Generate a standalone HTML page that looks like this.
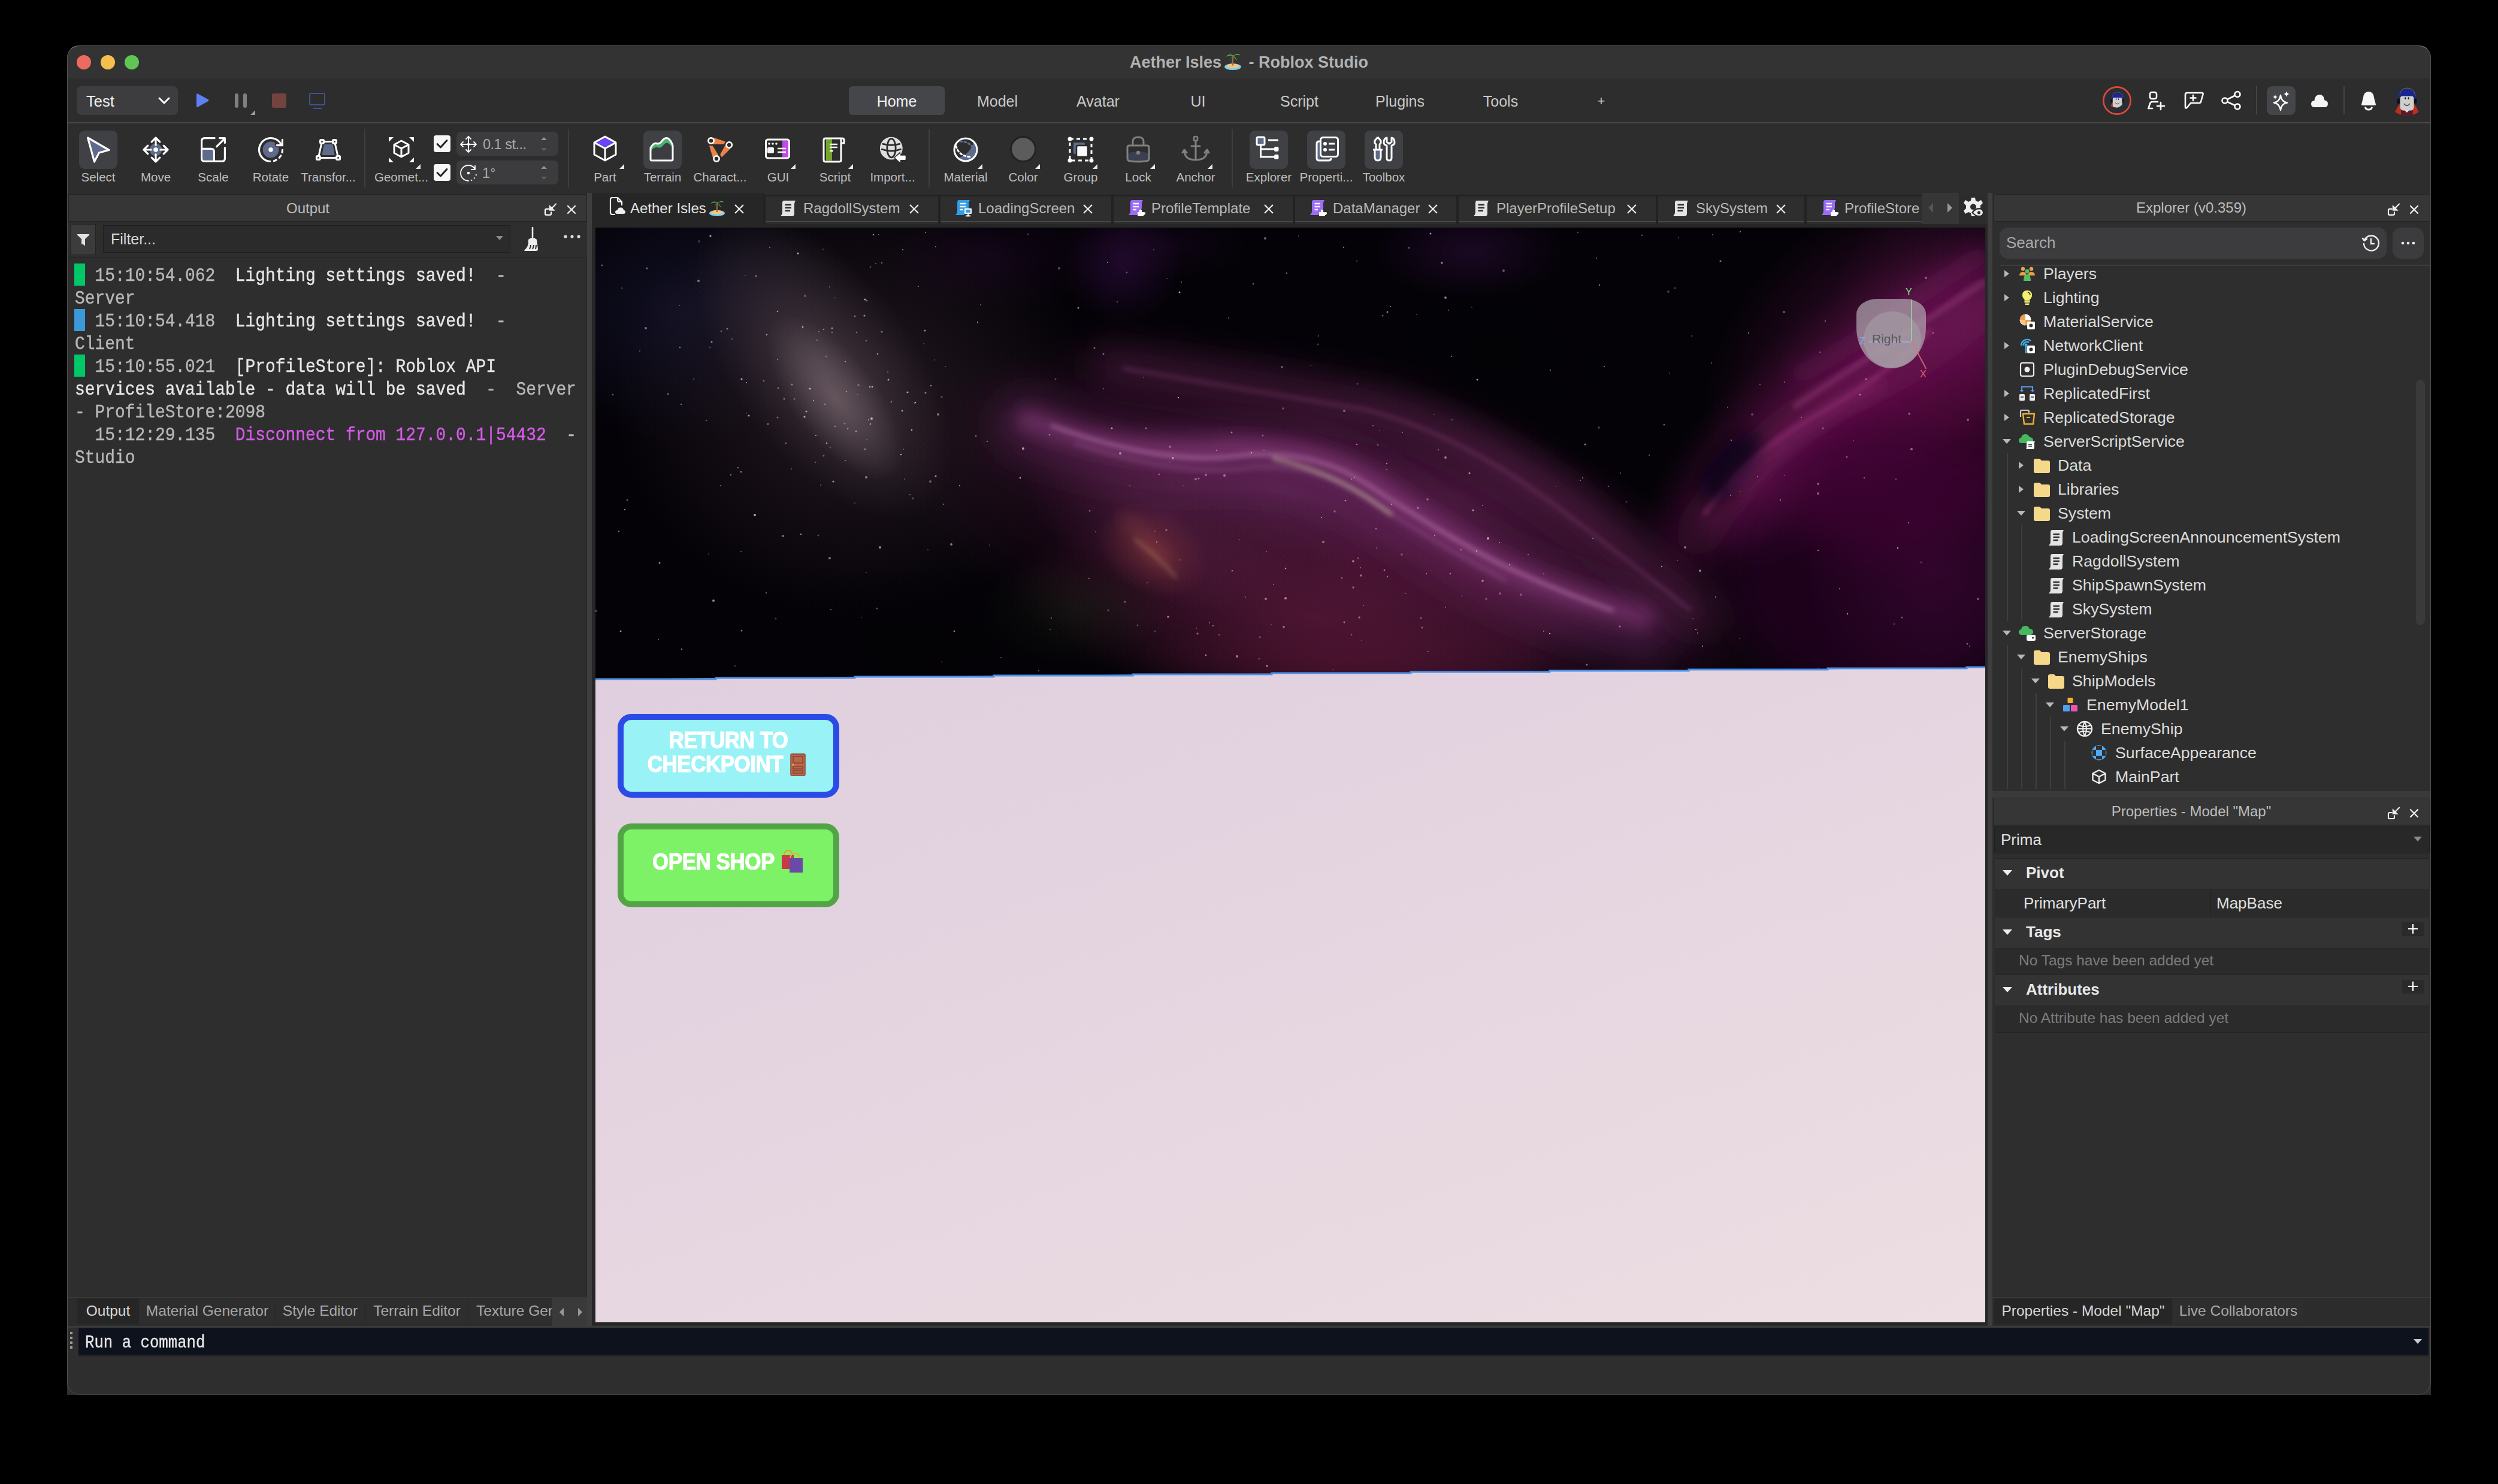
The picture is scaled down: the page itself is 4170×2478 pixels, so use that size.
<!DOCTYPE html>
<html><head><meta charset="utf-8">
<style>
*{margin:0;padding:0;box-sizing:border-box}
html,body{width:4170px;height:2478px;background:#000;overflow:hidden;font-family:"Liberation Sans",sans-serif;color:#d6d6d6}
div,span,svg{position:absolute}
span.i,svg.i{position:relative}
.win{left:112px;top:76px;width:3946px;height:2253px;border-radius:20px;background:#2c2c2c;overflow:hidden}
.ol{left:112px;top:76px;width:3946px;height:2253px;border-radius:20px;border:1.5px solid #4e4e4e;border-top-color:#7a7a7a;border-bottom-color:#444;z-index:50;pointer-events:none}
.t{white-space:nowrap}
.tl{top:92px;width:24px;height:24px;border-radius:50%}
.ttl{left:112px;width:3946px;top:84px;text-align:center;font-weight:bold;font-size:27px;color:#b2b2b2}
.tab1{top:145px;height:48px;text-align:center;font-size:25px;line-height:48px;color:#c9c9c9}
.btn{top:218px;width:64px;height:64px;border-radius:9px;background:#404145}
.lbl{top:284px;width:140px;text-align:center;font-size:20.5px;color:#bdbdbd;white-space:nowrap}
.sep{top:215px;width:2px;height:98px;background:#3e3e3e}
.tsep{top:144px;width:2px;height:47px;background:#444}
.log{font-family:"Liberation Mono",monospace;font-size:27.9px;white-space:pre;-webkit-text-stroke:0.35px currentColor}
.ln{left:0;white-space:pre;height:38px;line-height:38px;transform:scaleY(1.15);transform-origin:0 62%}
.ts{color:#b8b8b8}.msg{color:#e6e6e6}
.btab{top:2169px;height:40px;line-height:40px;text-align:center;font-size:24.5px;color:#a8a8a8;white-space:nowrap}
.ctab{top:334px;font-size:24px;color:#b9b9b9}
.tr{font-size:26.7px;color:#dcdcdc;height:40px;line-height:40px}
.bt{font-family:"Liberation Sans",sans-serif;font-weight:bold;font-size:38px;color:#fff;text-align:center;white-space:nowrap;letter-spacing:-0.5px;transform:scaleX(0.92);-webkit-text-stroke:1.2px #fff}
.tri{width:0;height:0;border-left:8px solid transparent;border-bottom:8px solid #e8e8e8}
</style></head><body>
<!-- window bg -->
<div class="win">
  <div style="left:0;top:0;width:3946px;height:55px;background:#333"></div>
  <div style="left:0;top:55px;width:3946px;height:73px;background:#2d2d2d"></div>
  <div style="left:0;top:128px;width:3946px;height:2px;background:#474747"></div>
  <div style="left:0;top:130px;width:3946px;height:116px;background:#2d2d2d"></div>
</div>
<div class="ol"></div>

<!-- title bar -->
<div class="tl" style="left:128px;background:#ed6a5e"></div>
<div class="tl" style="left:168px;background:#f5bf4f"></div>
<div class="tl" style="left:208px;background:#61c554"></div>
<div class="ttl t">Aether Isles<svg class="i" style="display:inline-block;vertical-align:-5px;margin:0 2px" width="34" height="34" viewBox="0 0 30 32"><ellipse cx="15" cy="26" rx="13" ry="5" fill="#7ad0f0"/><ellipse cx="15" cy="24.5" rx="10" ry="3.5" fill="#f2c580"/><path d="M15 24 Q14 15 16 8" stroke="#a0703a" stroke-width="2.2" fill="none"/><path d="M16 8 Q9 4 4 10 Q10 7 16 9 Q22 3 27 8 Q21 6 16 9 Q20 11 22 17 Q17 11 16 9 Q11 12 9 17 Q11 11 16 9Z" fill="#4caf50"/></svg> - Roblox Studio</div>

<!-- toolbar row -->
<div style="left:128px;top:144px;width:169px;height:48px;border-radius:8px;background:#3d3d40"></div>
<div class="t" style="left:144px;top:155px;font-size:25.5px;color:#f2f2f2">Test</div>
<svg style="left:263px;top:161px" width="22" height="14" viewBox="0 0 22 14"><path d="M3 3 L11 11 L19 3" stroke="#fff" stroke-width="3" fill="none" stroke-linecap="round" stroke-linejoin="round"/></svg>
<svg style="left:324px;top:154px" width="28" height="28" viewBox="0 0 28 28"><path d="M4 4 Q4 1.5 6.5 2.8 L23.5 12 Q25.5 13.5 23.5 15 L6.5 24.6 Q4 26 4 23.5Z" fill="#5f7ff5"/></svg>
<div style="left:392px;top:156px;width:6px;height:24px;border-radius:3px;background:#808080"></div>
<div style="left:406px;top:156px;width:6px;height:24px;border-radius:3px;background:#808080"></div>
<div class="tri" style="left:418px;top:184px;border-bottom-color:#9a9a9a"></div>
<div style="left:454px;top:156px;width:24px;height:24px;border-radius:3px;background:#744340"></div>
<div style="left:516px;top:155px;width:27px;height:21px;border-radius:3px;border:2px solid #3e5390"></div>
<div style="left:523px;top:180px;width:14px;height:2px;background:#3e5390"></div>

<div style="left:1417px;top:144px;width:160px;height:48px;border-radius:6px;background:#45464a"></div>
<div class="tab1 t" style="left:1417px;width:160px;color:#f4f4f4">Home</div>
<div class="tab1 t" style="left:1585px;width:160px">Model</div>
<div class="tab1 t" style="left:1753px;width:160px">Avatar</div>
<div class="tab1 t" style="left:1920px;width:160px">UI</div>
<div class="tab1 t" style="left:2089px;width:160px">Script</div>
<div class="tab1 t" style="left:2257px;width:160px">Plugins</div>
<div class="tab1 t" style="left:2425px;width:160px">Tools</div>
<div class="tab1 t" style="left:2593px;width:160px;font-size:22px">+</div>

<!-- right toolbar icons -->
<svg style="left:3510px;top:144px" width="48" height="48" viewBox="0 0 48 48"><circle cx="24" cy="24" r="22.6" fill="#2a2d33" stroke="#e0493a" stroke-width="2.6"/><clipPath id="avc"><circle cx="24" cy="24" r="21"/></clipPath><g clip-path="url(#avc)" transform="translate(5.5 5) scale(0.68)"><circle cx="28" cy="27.5" r="23.4" fill="#2a2d33"/><path d="M8.3 47 Q12 38 16.6 33 H39.6 Q44 38 47.5 47 Q40 53 28 52.5 Q16 53 8.3 47Z" fill="#b83020"/><path d="M18 41.5 H37.7 V52 Q28 53.5 18 52Z" fill="#5a1a28"/><path d="M22.6 42.6 H33.2 L28 48Z" fill="#e8e8e8"/><rect x="11" y="24.5" width="5.6" height="8.5" rx="2.5" fill="#111"/><rect x="39.5" y="24.5" width="5" height="8.5" rx="2.5" fill="#111"/><rect x="16.6" y="19" width="23" height="25.5" rx="5.5" fill="#cfcfcf"/><path d="M12 11.5 Q18 13 21 9.5 Q30 7 38 11 Q43.5 15 43.4 24 L40 25 Q39 20 36 20.5 H19 Q16.5 21 16.6 26 L15.5 24 Q13.5 17 16 15 Q13 14 12 11.5Z" fill="#1a2590"/><path d="M16 18 Q18 7 28 7 Q40 7 42 20" stroke="#8a7a40" stroke-width="0.8" fill="none"/><ellipse cx="25.3" cy="24.2" rx="1" ry="1.9" fill="#111"/><ellipse cx="30.6" cy="24.2" rx="1" ry="1.9" fill="#111"/><path d="M23 33.2 Q28 39.5 32.8 33.2" stroke="#111" stroke-width="1.2" fill="none"/></g></svg>
<svg style="left:3580px;top:150px" width="38" height="38" viewBox="0 0 38 38"><rect x="9" y="4" width="11" height="11" rx="3" stroke="#fff" stroke-width="2.6" fill="none"/><path d="M6.5 31 L9 23 Q10 20 13 20 H22" stroke="#fff" stroke-width="2.6" fill="none" stroke-linecap="round" stroke-linejoin="round"/><path d="M6.5 31 H13" stroke="#fff" stroke-width="2.6" stroke-linecap="round"/><path d="M27 21 V33 M21 27 H33" stroke="#fff" stroke-width="2.6" stroke-linecap="round"/></svg>
<svg style="left:3643px;top:150px" width="38" height="38" viewBox="0 0 38 38"><path d="M5 8 Q5 5 8 5 H33 Q35 5 34.5 7.5 L31 20 Q30.5 22 28.5 22 H14 L8 29.5 Q5 32 5 28.5Z" stroke="#fff" stroke-width="2.6" fill="none" stroke-linejoin="round"/><path d="M18 9 V18 M13.5 13.5 H22.5" stroke="#fff" stroke-width="2.6" stroke-linecap="round"/></svg>
<svg style="left:3706px;top:149px" width="38" height="38" viewBox="0 0 38 38"><circle cx="8" cy="19" r="4.5" stroke="#fff" stroke-width="2.6" fill="none"/><circle cx="29" cy="8.5" r="4.5" stroke="#fff" stroke-width="2.6" fill="none"/><circle cx="29" cy="29" r="4.5" stroke="#fff" stroke-width="2.6" fill="none"/><path d="M12 17 L25 10.5 M12 21 L25 27" stroke="#fff" stroke-width="2.6"/></svg>
<div class="tsep" style="left:3766px"></div>
<div style="left:3784px;top:144px;width:48px;height:48px;border-radius:9px;background:#45464a"></div>
<svg style="left:3788px;top:148px" width="40" height="40" viewBox="0 0 40 40"><path d="M19 11 Q20.5 22 30 23.5 Q20.5 25 19 36 Q17.5 25 8 23.5 Q17.5 22 19 11Z" stroke="#fff" stroke-width="2.4" fill="none" stroke-linejoin="round"/><path d="M29 4 Q29.7 8.3 34 9 Q29.7 9.7 29 14 Q28.3 9.7 24 9 Q28.3 8.3 29 4Z" fill="#fff"/><path d="M10 10 Q10.5 13.5 14 14 Q10.5 14.5 10 18 Q9.5 14.5 6 14 Q9.5 13.5 10 10Z" fill="#fff"/></svg>
<svg style="left:3856px;top:154px" width="32" height="28" viewBox="0 0 32 28"><path d="M8 25 Q2 25 2 19.5 Q2 14.5 7.5 14 Q8.5 4 16 4 Q23.5 4 24.5 13.5 Q30 14 30 19.5 Q30 25 24 25Z" fill="#f4f4f4"/></svg>
<div class="tsep" style="left:3912px"></div>
<svg style="left:3938px;top:150px" width="32" height="36" viewBox="0 0 32 36"><path d="M16 3 Q24 3 25 13 L28 24.5 Q28 26 26 26 H6 Q4 26 4 24.5 L7 13 Q8 3 16 3Z" fill="#f6f6f6"/><path d="M10.5 28.5 Q11 33 16 33 Q21 33 21.5 28.5" stroke="#f6f6f6" stroke-width="3" fill="none"/></svg>
<svg style="left:3990px;top:140px" width="56" height="56" viewBox="0 0 56 56"><circle cx="28" cy="27.5" r="23.4" fill="#2a2d33"/><path d="M8.3 47 Q12 38 16.6 33 H39.6 Q44 38 47.5 47 Q40 53 28 52.5 Q16 53 8.3 47Z" fill="#b83020"/><path d="M18 41.5 H37.7 V52 Q28 53.5 18 52Z" fill="#5a1a28"/><path d="M22.6 42.6 H33.2 L28 48Z" fill="#e8e8e8"/><rect x="11" y="24.5" width="5.6" height="8.5" rx="2.5" fill="#111"/><rect x="39.5" y="24.5" width="5" height="8.5" rx="2.5" fill="#111"/><rect x="16.6" y="19" width="23" height="25.5" rx="5.5" fill="#cfcfcf"/><path d="M12 11.5 Q18 13 21 9.5 Q30 7 38 11 Q43.5 15 43.4 24 L40 25 Q39 20 36 20.5 H19 Q16.5 21 16.6 26 L15.5 24 Q13.5 17 16 15 Q13 14 12 11.5Z" fill="#1a2590"/><path d="M16 18 Q18 7 28 7 Q40 7 42 20" stroke="#8a7a40" stroke-width="0.8" fill="none"/><ellipse cx="25.3" cy="24.2" rx="1" ry="1.9" fill="#111"/><ellipse cx="30.6" cy="24.2" rx="1" ry="1.9" fill="#111"/><path d="M23 33.2 Q28 39.5 32.8 33.2" stroke="#111" stroke-width="1.2" fill="none"/></svg>
</div>


<!-- ribbon -->
<div class="btn" style="left:132px"></div>
<div class="btn" style="left:1074px"></div>
<div class="btn" style="left:2086px"></div>
<div class="btn" style="left:2182px"></div>
<div class="btn" style="left:2278px"></div>
<div class="sep" style="left:608px"></div>
<div class="sep" style="left:948px"></div>
<div class="sep" style="left:1550px"></div>
<div class="sep" style="left:2056px"></div>
<!-- select -->
<svg style="left:140px;top:226px" width="48" height="48" viewBox="0 0 48 48"><path d="M6.5 4 L42 24.5 L25.5 29 L17.5 44Z" fill="#5f6b8a" stroke="#fff" stroke-width="3.2" stroke-linejoin="round"/></svg>
<!-- move -->
<svg style="left:236px;top:226px" width="48" height="48" viewBox="0 0 48 48"><circle cx="24" cy="24" r="10.3" fill="#5f6b8a"/><circle cx="24" cy="24" r="3.8" fill="#fff"/><path d="M24 4 V16.2 M24 31.8 V44 M4 24 H16.2 M31.8 24 H44 M17.2 10.8 L24 4 L30.8 10.8 M17.2 37.2 L24 44 L30.8 37.2 M10.8 17.2 L4 24 L10.8 30.8 M37.2 17.2 L44 24 L37.2 30.8" stroke="#fff" stroke-width="3.2" fill="none" stroke-linecap="round" stroke-linejoin="round"/></svg>
<!-- scale -->
<svg style="left:332px;top:226px" width="48" height="48" viewBox="0 0 48 48"><rect x="6.6" y="24.3" width="17" height="17.2" rx="2" fill="#5f6b8a"/><path d="M26.2 4.6 H9.6 Q4.6 4.6 4.6 9.6 V38.4 Q4.6 43.4 9.6 43.4 H38.4 Q43.4 43.4 43.4 38.4 V20.9" stroke="#fff" stroke-width="3.2" fill="none" stroke-linecap="round"/><path d="M4.6 22.3 H20.4 Q25.4 22.3 25.4 27.3 V43.4" stroke="#fff" stroke-width="3.2" fill="none"/><path d="M29.8 18.7 L42 6.5 M34.5 4.6 H43.4 V12.4" stroke="#fff" stroke-width="3.2" fill="none" stroke-linecap="round" stroke-linejoin="round"/></svg>
<!-- rotate -->
<svg style="left:428px;top:226px" width="48" height="48" viewBox="0 0 48 48"><circle cx="24" cy="24" r="13.4" fill="#5f6b8a"/><circle cx="35.2" cy="15.6" r="4.6" fill="#2d2d2d"/><circle cx="24" cy="24" r="3.7" fill="#fff"/><path d="M22.8 43.5 A19.5 19.5 0 1 1 41.7 15.8" stroke="#fff" stroke-width="3.2" fill="none" stroke-linecap="round"/><path d="M43.4 7.4 V16.7 H34.1" stroke="#fff" stroke-width="3.2" fill="none" stroke-linecap="round" stroke-linejoin="round"/><path d="M43.5 24.3 A19.5 19.5 0 0 1 43 28.4 M40.7 34 A19.5 19.5 0 0 1 38.3 37.3 M33.2 41.2 A19.5 19.5 0 0 1 29.4 42.7" stroke="#fff" stroke-width="3.2" fill="none" stroke-linecap="round"/></svg>
<!-- transform -->
<svg style="left:524px;top:226px" width="48" height="48" viewBox="0 0 48 48"><path d="M18 15 H30 Q31.5 15 31.8 16.5 L34.5 31 Q34.8 33 32.8 33 H15.6 Q13.6 33 13.9 31 L16.5 16.5 Q16.8 15 18 15Z" fill="#5f6b8a"/><path d="M13.5 10.4 H34.5 L40.6 37.5 H7.4Z" stroke="#fff" stroke-width="3" fill="none" stroke-linejoin="round"/><rect x="10.6" y="7.5" width="5.8" height="5.8" rx="1.5" fill="#2d2d2d" stroke="#fff" stroke-width="3.2"/><rect x="31.6" y="7.5" width="5.8" height="5.8" rx="1.5" fill="#2d2d2d" stroke="#fff" stroke-width="3.2"/><rect x="4.5" y="34.6" width="5.8" height="5.8" rx="1.5" fill="#2d2d2d" stroke="#fff" stroke-width="3.2"/><rect x="37.7" y="34.6" width="5.8" height="5.8" rx="1.5" fill="#2d2d2d" stroke="#fff" stroke-width="3.2"/></svg>
<!-- geometry -->
<svg style="left:646px;top:226px" width="48" height="48" viewBox="0 0 48 48"><path d="M3 3 H11 L3 11Z M45 3 H37 L45 11Z M3 45 H11 L3 37Z M45 45 H37 L45 37Z" fill="#fff"/><path d="M24 9 L36 15.5 V29.5 L24 36 L12 29.5 V15.5Z M12 15.5 L24 22 L36 15.5 M24 22 V36" stroke="#fff" stroke-width="3" fill="none" stroke-linejoin="round"/></svg>
<div class="tri" style="left:694px;top:274px"></div>
<div style="left:724px;top:226px;width:28px;height:28px;border-radius:4px;background:#f7f7f7"></div>
<svg style="left:724px;top:226px" width="28" height="28" viewBox="0 0 28 28"><path d="M6 14.5 L11.5 20 L22 8.5" stroke="#222" stroke-width="3" fill="none" stroke-linecap="round" stroke-linejoin="round"/></svg>
<div style="left:724px;top:274px;width:28px;height:28px;border-radius:4px;background:#f7f7f7"></div>
<svg style="left:724px;top:274px" width="28" height="28" viewBox="0 0 28 28"><path d="M6 14.5 L11.5 20 L22 8.5" stroke="#222" stroke-width="3" fill="none" stroke-linecap="round" stroke-linejoin="round"/></svg>
<div style="left:762px;top:220px;width:170px;height:40px;border-radius:8px;background:#3c3c3f"></div>
<div style="left:762px;top:268px;width:170px;height:40px;border-radius:8px;background:#3c3c3f"></div>
<svg style="left:767px;top:226px" width="30" height="30" viewBox="0 0 30 30"><circle cx="15" cy="15" r="2.2" fill="#fff"/><path d="M15 2 V28 M2 15 H28 M11 6 L15 2 L19 6 M11 24 L15 28 L19 24 M6 11 L2 15 L6 19 M24 11 L28 15 L24 19" stroke="#fff" stroke-width="1.8" fill="none" stroke-linecap="round" stroke-linejoin="round"/></svg>
<svg style="left:767px;top:274px" width="30" height="30" viewBox="0 0 30 30"><circle cx="15" cy="15" r="2.2" fill="#fff"/><path d="M15 28 A13 13 0 0 1 15 2 A13 13 0 0 1 26 8.5" stroke="#fff" stroke-width="1.8" fill="none" stroke-linecap="round"/><path d="M26 3 V9 H20" stroke="#fff" stroke-width="1.8" fill="none" stroke-linecap="round" stroke-linejoin="round"/><path d="M28 17 A13 13 0 0 1 18 27.6" stroke="#fff" stroke-width="1.8" fill="none" stroke-dasharray="2.5 3.5"/></svg>
<div class="t" style="left:806px;top:228px;font-size:23.5px;color:#a9a9a9;letter-spacing:-0.5px">0.1 st...</div>
<div class="t" style="left:805px;top:276px;font-size:23.5px;color:#a9a9a9">1°</div>
<svg style="left:900px;top:226px" width="16" height="30" viewBox="0 0 16 30"><path d="M3 8 L8 3 L13 8Z" fill="#8f8f8f"/><path d="M3 21 L8 26 L13 21Z" fill="#5e5e5e"/></svg>
<svg style="left:900px;top:274px" width="16" height="30" viewBox="0 0 16 30"><path d="M3 8 L8 3 L13 8Z" fill="#8f8f8f"/><path d="M3 21 L8 26 L13 21Z" fill="#5e5e5e"/></svg>
<!-- part -->
<svg style="left:986px;top:224px" width="48" height="48" viewBox="0 0 48 48"><path d="M24 5 L42 14.5 L24 24 L6 14.5Z" fill="#6b45f5"/><path d="M24 4 L42 14 V34 L24 44 L6 34 V14Z M6 14 L24 24 L42 14 M24 24 V44" stroke="#fff" stroke-width="3" fill="none" stroke-linejoin="round"/></svg>
<div class="tri" style="left:1034px;top:274px"></div>
<!-- terrain -->
<svg style="left:1082px;top:226px" width="48" height="48" viewBox="0 0 48 48"><path d="M4 21 Q9 12 14 13.5 Q18 15 22 11 Q27 3 33 5 Q38 8 41 17 L41 40 Q41 42 39 42 H7 Q4 42 4 40Z" fill="#3c3d42"/><path d="M4 21 Q9 12 14 13.5 Q18 15 22 11 Q27 3 33 5 Q38 8 41 17 L41 23 Q38 15 33 13 Q28 12 24 18 Q20 22 15 20 Q9 19 4 27Z" fill="#4eb26e"/><path d="M4 40 V21 Q9 12 14 13.5 Q18 15 22 11 Q27 3 33 5 Q38 8 41 17 V40 Q41 42 39 42 H6 Q4 42 4 40Z" stroke="#fff" stroke-width="3" fill="none" stroke-linejoin="round"/></svg>
<!-- character -->
<svg style="left:1178px;top:226px" width="48" height="48" viewBox="0 0 48 48"><path d="M12.3 3.6 L32.6 10.2 L30.7 14.9 L11.8 15.1Z M5.9 17.2 L11.8 17.7 L21.2 32.8 L12.3 38.5Z M33 15.8 L41.5 22 L26.9 36.6 L24 32.3Z" fill="#e98347"/><circle cx="9" cy="9" r="4.6" fill="#2b2b2b" stroke="#fff" stroke-width="2.7"/><circle cx="39.2" cy="16" r="4.6" fill="#2b2b2b" stroke="#fff" stroke-width="2.7"/><circle cx="18" cy="39" r="4.6" fill="#2b2b2b" stroke="#fff" stroke-width="2.7"/></svg>
<!-- gui -->
<svg style="left:1274px;top:226px" width="48" height="48" viewBox="0 0 48 48"><rect x="4.5" y="7" width="39" height="31" rx="3" fill="#2b2b2b"/><rect x="32" y="8.5" width="10" height="28" fill="#c04ae8"/><rect x="4.5" y="7" width="39" height="31" rx="3.5" stroke="#fff" stroke-width="3" fill="none"/><circle cx="10" cy="14" r="1.8" fill="#fff"/><circle cx="16" cy="14" r="1.8" fill="#fff"/><circle cx="22" cy="14" r="1.8" fill="#fff"/><rect x="7" y="20" width="11" height="10" rx="2" fill="#f4f4f4"/><path d="M24 22 H38 M24 28 H38" stroke="#fff" stroke-width="2.6"/></svg>
<div class="tri" style="left:1320px;top:274px"></div>
<!-- script -->
<svg style="left:1370px;top:226px" width="48" height="48" viewBox="0 0 48 48"><path d="M9 5 H19 V42 H9Z" fill="#72a52a"/><path d="M8 44 Q5 44 5 41 V8 Q5 5 8 5 H36 Q39 5 39 8 V13 H35 M8 44 H31 Q34 44 34 41 V5" stroke="#fff" stroke-width="3" fill="none" stroke-linejoin="round"/><path d="M15 15 H28 M15 20 H28 M15 26 H21" stroke="#fff" stroke-width="2.6"/></svg>
<div class="tri" style="left:1416px;top:274px"></div>
<!-- import -->
<svg style="left:1466px;top:226px" width="48" height="48" viewBox="0 0 48 48"><circle cx="21.8" cy="21.7" r="18.9" fill="#dedede"/><path d="M8 14.3 Q22 18.5 35.5 14.3 M6.3 23.2 Q22 29 37.4 23.2" stroke="#2b2b2b" stroke-width="2.8" fill="none" stroke-linecap="round"/><ellipse cx="22" cy="21.3" rx="7.2" ry="15.6" stroke="#2b2b2b" stroke-width="2.8" fill="none"/><path d="M26 37.5 L36.5 27.5 L38 32.3 H47 V42.2 H38 L36.5 47 Z" fill="#2b2b2b"/><path d="M28.4 37.5 L36.5 30.5 V34.2 H45.2 V40.4 H36.5 V44.6Z" fill="#fff" stroke="#fff" stroke-width="1" stroke-linejoin="round"/></svg>
<!-- material -->
<svg style="left:1588px;top:226px" width="48" height="48" viewBox="0 0 48 48"><path d="M38 10 A19 19 0 0 1 10 38 Q30 34 38 10Z" fill="#5f6b8a"/><circle cx="24" cy="24" r="19" stroke="#fff" stroke-width="3" fill="none"/><path d="M8 18 Q12 34 31 36" stroke="#fff" stroke-width="3" fill="none" stroke-dasharray="3 4" stroke-linecap="round"/><path d="M15 10 Q28 10 36 20" stroke="#5f6b8a" stroke-width="3" fill="none" stroke-dasharray="3 4" stroke-linecap="round"/></svg>
<div class="tri" style="left:1632px;top:274px"></div>
<!-- color -->
<div style="left:1686px;top:227px;width:44px;height:44px;border-radius:50%;background:#5c5c5c;border:3px solid #222"></div>
<div class="tri" style="left:1728px;top:274px"></div>
<!-- group -->
<svg style="left:1780px;top:226px" width="48" height="48" viewBox="0 0 48 48"><rect x="6" y="6" width="36" height="36" stroke="#fff" stroke-width="3" fill="none" stroke-dasharray="6 5"/><circle cx="6" cy="6" r="3.5" fill="#fff"/><circle cx="42" cy="6" r="3.5" fill="#fff"/><circle cx="6" cy="42" r="3.5" fill="#fff"/><circle cx="42" cy="42" r="3.5" fill="#fff"/><rect x="12" y="12" width="19" height="19" rx="2" fill="#5f6b8a"/><rect x="17" y="17" width="19" height="19" rx="2.5" fill="#fafafa" stroke="#2b2b2b" stroke-width="2.5"/></svg>
<div class="tri" style="left:1824px;top:274px"></div>
<!-- lock -->
<svg style="left:1876px;top:226px" width="48" height="48" viewBox="0 0 48 48"><path d="M6 30 Q24 24 42 30 V38 Q42 43 37 43 H11 Q6 43 6 38Z" fill="#3a3f52"/><path d="M15 17 V10 Q15 3 24 3 Q33 3 33 10 V17" stroke="#808080" stroke-width="3" fill="none"/><path d="M9 17 H39 Q42 17 42 20 V38 Q42 43 37 43 Q24 45 11 43 Q6 43 6 38 V20 Q6 17 9 17Z" stroke="#808080" stroke-width="3" fill="none"/><circle cx="24" cy="29" r="3.2" fill="#808080"/></svg>
<div class="tri" style="left:1920px;top:274px"></div>
<!-- anchor -->
<svg style="left:1972px;top:226px" width="48" height="48" viewBox="0 0 48 48"><rect x="21" y="2" width="6" height="7" rx="2" stroke="#808080" stroke-width="2.6" fill="none"/><path d="M24 9 V41 M17 18 H31 M5 25 Q5 41 24 41 Q43 41 43 25 M2 29 L5 24 L9 29 M39 29 L43 24 L46 29" stroke="#808080" stroke-width="3" fill="none" stroke-linecap="round" stroke-linejoin="round"/></svg>
<div class="tri" style="left:2016px;top:274px"></div>
<!-- explorer -->
<svg style="left:2094px;top:226px" width="48" height="48" viewBox="0 0 48 48"><rect x="4" y="3" width="13" height="13" rx="2" fill="#5f6b8a" stroke="#fff" stroke-width="3"/><path d="M23 8 H40 M10.5 16 V36 H35 M10.5 23 H35" stroke="#fff" stroke-width="3" fill="none"/><rect x="33" y="19" width="7.5" height="8" rx="2.5" fill="#fff"/><rect x="33" y="32" width="7.5" height="8" rx="2.5" fill="#fff"/></svg>
<!-- properties -->
<svg style="left:2190px;top:226px" width="48" height="48" viewBox="0 0 48 48"><path d="M12 10 Q8 10 8 14 V38 Q8 42 12 42 H28 Q31 42 31.5 39 H14 V10Z" fill="#5f6b8a"/><path d="M14 10 H12 Q8 10 8 14 V38 Q8 42 12 42 H28 Q32 42 32 38" stroke="#fff" stroke-width="3" fill="none"/><rect x="14.5" y="3.5" width="29" height="32" rx="4" stroke="#fff" stroke-width="3" fill="#404145"/><circle cx="22" cy="14" r="3" fill="#fff"/><circle cx="22" cy="24" r="3" fill="#fff"/><path d="M28 14 H38 M28 24 H38" stroke="#fff" stroke-width="3"/></svg>
<!-- toolbox -->
<svg style="left:2286px;top:226px" width="48" height="48" viewBox="0 0 48 48"><path d="M9 25 H19 V36 Q19 42 14 42 Q9 42 9 36Z" fill="#5f6b8a"/><path d="M14 3 L19 9 V13 L17 15 V24 M14 3 L9 9 V13 L11 15 V24 M6 24 H22 M9 24 V36 Q9 42 14 42 Q19 42 19 36 V24" stroke="#fff" stroke-width="3" fill="none" stroke-linejoin="round"/><path d="M29 4 V11 L33 14 L37 11 V4 Q42 5 42 12 Q42 16 37 17 V38 Q37 42 33 42 Q29 42 29 38 V17 Q24 16 24 12 Q24 5 29 4Z" stroke="#fff" stroke-width="3" fill="none" stroke-linejoin="round"/></svg>
<!-- labels -->
<div class="lbl" style="left:94px">Select</div>
<div class="lbl" style="left:190px">Move</div>
<div class="lbl" style="left:286px">Scale</div>
<div class="lbl" style="left:382px">Rotate</div>
<div class="lbl" style="left:478px">Transfor...</div>
<div class="lbl" style="left:600px">Geomet...</div>
<div class="lbl" style="left:940px">Part</div>
<div class="lbl" style="left:1036px">Terrain</div>
<div class="lbl" style="left:1132px">Charact...</div>
<div class="lbl" style="left:1229px">GUI</div>
<div class="lbl" style="left:1324px">Script</div>
<div class="lbl" style="left:1420px">Import...</div>
<div class="lbl" style="left:1542px">Material</div>
<div class="lbl" style="left:1638px">Color</div>
<div class="lbl" style="left:1734px">Group</div>
<div class="lbl" style="left:1830px">Lock</div>
<div class="lbl" style="left:1926px">Anchor</div>
<div class="lbl" style="left:2048px">Explorer</div>
<div class="lbl" style="left:2144px">Properti...</div>
<div class="lbl" style="left:2240px">Toolbox</div>


<!-- ===== LEFT OUTPUT PANEL ===== -->
<div style="left:112px;top:322px;width:868px;height:1894px;background:#2c2c2c"></div>
<div style="left:114px;top:324px;width:866px;height:46px;background:#363636;border:1px solid #232323"></div>
<div class="t" style="left:114px;top:334px;width:800px;text-align:center;font-size:24px;color:#bdbdbd">Output</div>
<svg style="left:905px;top:336px" width="28" height="28" viewBox="0 0 28 28"><path d="M10.7 13 H7 Q5 13 5 15 V21 Q5 23 7 23 H13 Q15 23 15 21 V18.4" stroke="#fff" stroke-width="2.1" fill="none" stroke-linecap="round"/><path d="M23.1 4.6 L16 11.7" stroke="#eee" stroke-width="2.1" stroke-linecap="round"/><path d="M11.9 6 V15.7 H21.7Z" fill="#eee"/></svg>
<svg style="left:944px;top:340px" width="20" height="20" viewBox="0 0 20 20"><path d="M4 4 L16 16 M16 4 L4 16" stroke="#eee" stroke-width="2.3" stroke-linecap="round"/></svg>
<div style="left:114px;top:370px;width:866px;height:60px;background:#2e2e2e"></div>
<div style="left:118px;top:374px;width:42px;height:52px;background:#3c3c3c;border:1.5px solid #232323"></div>
<svg style="left:127px;top:389px" width="24" height="24" viewBox="0 0 24 24"><path d="M2.5 2 H21.5 Q23 2 22 3.5 L15 10 V22 L12 19 L9 19 V10 L2 3.5 Q1 2 2.5 2Z" fill="#e2e2e2"/></svg>
<div style="left:172px;top:376px;width:680px;height:46px;background:#2b2b2b;border:1.5px solid #1e1e1e"></div>
<div class="t" style="left:185px;top:385px;font-size:25px;color:#d8d8d8">Filter...</div>
<svg style="left:826px;top:392px" width="16" height="12" viewBox="0 0 16 12"><path d="M2 2 H14 L8 9Z" fill="#8a8a8a"/></svg>
<svg style="left:872px;top:376px" width="36" height="48" viewBox="0 0 36 48"><path d="M17 4 V20" stroke="#eee" stroke-width="2.6" stroke-linecap="round"/><path d="M10 24 Q17 18 24 24 L26 40 Q26 43 23 43 H5 Q2 43 4 41 Q9 37 10 30Z" fill="#eee"/><path d="M12 40 Q14 35 14 33 M17 40 Q19 35 19 33 M22 40 Q23 36 23 33" stroke="#2e2e2e" stroke-width="2" fill="none"/></svg>
<svg style="left:940px;top:390px" width="30" height="10" viewBox="0 0 30 10"><circle cx="4" cy="5" r="2.6" fill="#ddd"/><circle cx="15" cy="5" r="2.6" fill="#ddd"/><circle cx="26" cy="5" r="2.6" fill="#ddd"/></svg>
<div style="left:114px;top:429px;width:866px;height:1737px;background:#2e2e2e;border-top:1.5px solid #232323;border-right:1px solid #252525"></div>
<!-- log -->
<div style="left:124px;top:440px;width:18px;height:37px;background:#00c767"></div>
<div style="left:124px;top:516px;width:18px;height:37px;background:#3a9ad9"></div>
<div style="left:124px;top:592px;width:18px;height:37px;background:#00c767"></div>
<div class="log" style="left:125px;top:442.5px">
<div class="ln" style="top:0"><span class="i ts">  15:10:54.062  </span><span class="i msg">Lighting settings saved!</span><span class="i ts">  -</span></div>
<div class="ln" style="top:38px"><span class="i ts">Server</span></div>
<div class="ln" style="top:76px"><span class="i ts">  15:10:54.418  </span><span class="i msg">Lighting settings saved!</span><span class="i ts">  -</span></div>
<div class="ln" style="top:114px"><span class="i ts">Client</span></div>
<div class="ln" style="top:152px"><span class="i ts">  15:10:55.021  </span><span class="i msg">[ProfileStore]: Roblox API</span></div>
<div class="ln" style="top:190px"><span class="i msg">services available - data will be saved</span><span class="i ts">  -  Server</span></div>
<div class="ln" style="top:228px"><span class="i ts">- ProfileStore:2098</span></div>
<div class="ln" style="top:266px"><span class="i ts">  15:12:29.135  </span><span class="i" style="color:#d55ae8">Disconnect from 127.0.0.1|54432</span><span class="i ts">  -</span></div>
<div class="ln" style="top:304px"><span class="i ts">Studio</span></div>
</div>
<!-- bottom tabs left -->
<div style="left:112px;top:2166px;width:868px;height:50px;background:#2c2c2c;border-top:1.5px solid #3a3a3a"></div>
<div style="left:129px;top:2168px;width:103px;height:43px;background:#262626"></div>
<div class="btab" style="left:129px;width:103px;color:#d8d8d8">Output</div>
<div class="btab" style="left:234px;width:224px;background:#2e2e2e">Material Generator</div>
<div class="btab" style="left:461px;width:147px;background:#2e2e2e">Style Editor</div>
<div class="btab" style="left:612px;width:168px;background:#2e2e2e">Terrain Editor</div>
<div class="btab" style="left:784px;width:138px;background:#2e2e2e;overflow:hidden;text-align:left;padding-left:11px">Texture Generator</div>
<div style="left:922px;top:2168px;width:58px;height:46px;background:#3a3a3a"></div>
<svg style="left:931px;top:2182px" width="14" height="18" viewBox="0 0 14 18"><path d="M10 2 V16 L3 9Z" fill="#999"/></svg>
<svg style="left:961px;top:2182px" width="14" height="18" viewBox="0 0 14 18"><path d="M4 2 V16 L11 9Z" fill="#999"/></svg>
<div style="left:980px;top:322px;width:8px;height:1894px;background:#3e3e3e"></div>

<!-- ===== CENTER ===== -->
<div style="left:988px;top:322px;width:2330px;height:1894px;background:#2c2c2c"></div>
<!-- center tabs -->
<div style="left:988px;top:322px;width:2330px;height:52px;background:#2c2c2c"></div>
<div style="left:989px;top:322px;width:287px;height:53px;background:#262626"></div>
<svg style="left:1016px;top:328px" width="30" height="32" viewBox="0 0 30 32"><path d="M11 30 H6 Q3 30 3 27 V5 Q3 2 6 2 H15 L22 9 V15" stroke="#fff" stroke-width="2.2" fill="none" stroke-linejoin="round"/><path d="M15 2 V6 Q15 9 18 9 H22" stroke="#fff" stroke-width="2.2" fill="none"/><path d="M14 29 Q11 29 11 26 Q11 23 14.5 23 Q15.5 18.5 20 18.5 Q24.5 18.5 25 23 Q28 23 28 26 Q28 29 25 29Z" fill="#eee"/></svg>
<div class="ctab t" style="left:1052px;color:#e2e2e2">Aether Isles</div>
<svg style="left:1182px;top:330px" width="30" height="32" viewBox="0 0 30 32"><ellipse cx="15" cy="26" rx="13" ry="5" fill="#7ad0f0"/><ellipse cx="15" cy="24.5" rx="10" ry="3.5" fill="#f2c580"/><path d="M15 24 Q14 15 16 8" stroke="#a0703a" stroke-width="2.2" fill="none"/><path d="M16 8 Q9 4 4 10 Q10 7 16 9 Q22 3 27 8 Q21 6 16 9 Q20 11 22 17 Q17 11 16 9 Q11 12 9 17 Q11 11 16 9Z" fill="#4caf50"/></svg>
<svg style="left:1224px;top:339px" width="20" height="20" viewBox="0 0 20 20"><path d="M3 3 L17 17 M17 3 L3 17" stroke="#eee" stroke-width="2.2"/></svg>
<div style="left:1278px;top:326px;width:288px;height:45px;background:#2e2e2e;border-top:2px solid #222;border-bottom:2px solid #474747"></div><div style="left:1274px;top:326px;width:4px;height:48px;background:#222"></div>
<svg style="left:1301px;top:333px" width="30" height="30" viewBox="0 0 30 30"><path d="M8 2 H27 Q25 5 25 8 V24 Q25 28 21 28 H2 Q5 25 5 22 V6 Q5 2 8 2Z" fill="#e4e4e4"/><path d="M9.5 9 H20 M9.5 14 H20 M9.5 19 H18" stroke="#2e2e2e" stroke-width="2.4"/></svg>
<div class="ctab t" style="left:1341px">RagdollSystem</div>
<svg style="left:1516px;top:339px" width="20" height="20" viewBox="0 0 20 20"><path d="M3 3 L17 17 M17 3 L3 17" stroke="#eee" stroke-width="2.2"/></svg>
<div style="left:1570px;top:326px;width:286px;height:45px;background:#2e2e2e;border-top:2px solid #222;border-bottom:2px solid #474747"></div><div style="left:1566px;top:326px;width:4px;height:48px;background:#222"></div>
<svg style="left:1593px;top:332px" width="32" height="32" viewBox="0 0 32 32"><path d="M8 2 H26 Q24 5 24 8 V16 L16 27 H2 Q5 24 5 21 V6 Q5 2 8 2Z" fill="#2f9de8"/><path d="M9.5 8 H19 M9.5 13 H19 M9.5 18 H15" stroke="#fff" stroke-width="2.4"/><rect x="17" y="16" width="12" height="9" rx="1" fill="#fff"/><rect x="19" y="18" width="8" height="5" fill="#2f9de8"/><path d="M23 25 V28 M19 28.5 H27" stroke="#fff" stroke-width="2"/></svg>
<div class="ctab t" style="left:1633px">LoadingScreen</div>
<svg style="left:1806px;top:339px" width="20" height="20" viewBox="0 0 20 20"><path d="M3 3 L17 17 M17 3 L3 17" stroke="#eee" stroke-width="2.2"/></svg>
<div style="left:1859px;top:326px;width:299px;height:45px;background:#2e2e2e;border-top:2px solid #222;border-bottom:2px solid #474747"></div><div style="left:1855px;top:326px;width:4px;height:48px;background:#222"></div>
<svg style="left:1882px;top:332px" width="32" height="32" viewBox="0 0 32 32"><path d="M8 2 H26 Q24 5 24 8 V16 L16 27 H2 Q5 24 5 21 V6 Q5 2 8 2Z" fill="#9b6cf5"/><path d="M9.5 8 H19 M9.5 13 H19 M9.5 18 H15" stroke="#fff" stroke-width="2.4"/><path d="M17 29 V22 H20 Q19 18 22 18 Q25 18 24 22 H27 Q31 22 30 25 Q29 27 27 27 V29Z" fill="#fff"/></svg>
<div class="ctab t" style="left:1922px">ProfileTemplate</div>
<svg style="left:2108px;top:339px" width="20" height="20" viewBox="0 0 20 20"><path d="M3 3 L17 17 M17 3 L3 17" stroke="#eee" stroke-width="2.2"/></svg>
<div style="left:2162px;top:326px;width:270px;height:45px;background:#2e2e2e;border-top:2px solid #222;border-bottom:2px solid #474747"></div><div style="left:2158px;top:326px;width:4px;height:48px;background:#222"></div>
<svg style="left:2185px;top:332px" width="32" height="32" viewBox="0 0 32 32"><path d="M8 2 H26 Q24 5 24 8 V16 L16 27 H2 Q5 24 5 21 V6 Q5 2 8 2Z" fill="#9b6cf5"/><path d="M9.5 8 H19 M9.5 13 H19 M9.5 18 H15" stroke="#fff" stroke-width="2.4"/><path d="M17 29 V22 H20 Q19 18 22 18 Q25 18 24 22 H27 Q31 22 30 25 Q29 27 27 27 V29Z" fill="#fff"/></svg>
<div class="ctab t" style="left:2225px">DataManager</div>
<svg style="left:2382px;top:339px" width="20" height="20" viewBox="0 0 20 20"><path d="M3 3 L17 17 M17 3 L3 17" stroke="#eee" stroke-width="2.2"/></svg>
<div style="left:2435px;top:326px;width:329px;height:45px;background:#2e2e2e;border-top:2px solid #222;border-bottom:2px solid #474747"></div><div style="left:2431px;top:326px;width:4px;height:48px;background:#222"></div>
<svg style="left:2458px;top:333px" width="30" height="30" viewBox="0 0 30 30"><path d="M8 2 H27 Q25 5 25 8 V24 Q25 28 21 28 H2 Q5 25 5 22 V6 Q5 2 8 2Z" fill="#e4e4e4"/><path d="M9.5 9 H20 M9.5 14 H20 M9.5 19 H18" stroke="#2e2e2e" stroke-width="2.4"/></svg>
<div class="ctab t" style="left:2498px">PlayerProfileSetup</div>
<svg style="left:2714px;top:339px" width="20" height="20" viewBox="0 0 20 20"><path d="M3 3 L17 17 M17 3 L3 17" stroke="#eee" stroke-width="2.2"/></svg>
<div style="left:2768px;top:326px;width:245px;height:45px;background:#2e2e2e;border-top:2px solid #222;border-bottom:2px solid #474747"></div><div style="left:2764px;top:326px;width:4px;height:48px;background:#222"></div>
<svg style="left:2791px;top:333px" width="30" height="30" viewBox="0 0 30 30"><path d="M8 2 H27 Q25 5 25 8 V24 Q25 28 21 28 H2 Q5 25 5 22 V6 Q5 2 8 2Z" fill="#e4e4e4"/><path d="M9.5 9 H20 M9.5 14 H20 M9.5 19 H18" stroke="#2e2e2e" stroke-width="2.4"/></svg>
<div class="ctab t" style="left:2831px">SkySystem</div>
<svg style="left:2963px;top:339px" width="20" height="20" viewBox="0 0 20 20"><path d="M3 3 L17 17 M17 3 L3 17" stroke="#eee" stroke-width="2.2"/></svg>
<div style="left:3016px;top:326px;width:254px;height:45px;background:#2e2e2e;border-top:2px solid #222;border-bottom:2px solid #474747"></div><div style="left:3012px;top:326px;width:4px;height:48px;background:#222"></div>
<svg style="left:3039px;top:332px" width="32" height="32" viewBox="0 0 32 32"><path d="M8 2 H26 Q24 5 24 8 V16 L16 27 H2 Q5 24 5 21 V6 Q5 2 8 2Z" fill="#9b6cf5"/><path d="M9.5 8 H19 M9.5 13 H19 M9.5 18 H15" stroke="#fff" stroke-width="2.4"/><path d="M17 29 V22 H20 Q19 18 22 18 Q25 18 24 22 H27 Q31 22 30 25 Q29 27 27 27 V29Z" fill="#fff"/></svg>
<div class="ctab t" style="left:3079px">ProfileStore</div>
<div style="left:3208px;top:322px;width:62px;height:52px;background:#363636"></div>
<svg style="left:3216px;top:336px" width="16" height="22" viewBox="0 0 16 22"><path d="M11 3 V19 L3 11Z" fill="#555"/></svg>
<svg style="left:3246px;top:336px" width="16" height="22" viewBox="0 0 16 22"><path d="M5 3 V19 L13 11Z" fill="#999"/></svg>
<svg style="left:3276px;top:328px" width="36" height="36" viewBox="0 0 36 36"><path d="M15 2 H21 L22 7 L26 9 L31 6 L34 11 L30 15 V20 L34 24 L31 29 L26 26 L22 28 L21 33 H15 L14 28 L10 26 L5 29 L2 24 L6 20 V15 L2 11 L5 6 L10 9 L14 7Z" fill="#eee"/><circle cx="18" cy="17.5" r="5" fill="#2c2c2c"/><path d="M15 27 Q21 19 28 19 Q34 19 36 27 Q34 34 28 34 Q21 34 15 27Z" fill="#2c2c2c"/><path d="M18 27 Q22 21.5 28 21.5 Q33 21.5 34 27 Q33 32 28 32 Q22 32 18 27Z" fill="#eee"/><circle cx="27.5" cy="27" r="2.6" fill="#2c2c2c"/></svg>
<div style="left:988px;top:374px;width:2330px;height:1838px;background:#262626"></div>
<!-- viewport -->
<div style="left:994px;top:380px;width:2320px;height:1828px;background:linear-gradient(160deg,#dccbdd 0%,#e3d3e0 50%,#ecdee2 100%);overflow:hidden">
<div style="left:0;top:0;width:2320px;height:760px;overflow:hidden;clip-path:polygon(0 0,2320px 0,2320px 735px,0 754px);background:#040207">
<div style="left:-130px;top:-80px;width:560px;height:440px;transform:rotate(0deg);background:radial-gradient(ellipse closest-side,rgba(25,25,55,0.6) 0%,transparent 100%)"></div>
<div style="left:30px;top:-70px;width:800px;height:720px;transform:rotate(0deg);background:radial-gradient(ellipse closest-side,rgba(42,30,38,0.85) 0%,transparent 100%)"></div>
<div style="left:230px;top:-70px;width:300px;height:600px;transform:rotate(-37deg);background:radial-gradient(ellipse closest-side,rgba(90,75,84,0.6) 0%,transparent 100%)"></div>
<div style="left:330px;top:120px;width:140px;height:330px;transform:rotate(-37deg);background:radial-gradient(ellipse closest-side,rgba(140,122,130,0.5) 0%,transparent 100%)"></div>
<div style="left:470px;top:-40px;width:380px;height:180px;transform:rotate(0deg);background:radial-gradient(ellipse closest-side,rgba(40,10,50,0.35) 0%,transparent 100%)"></div>
<div style="left:830px;top:-25px;width:260px;height:110px;transform:rotate(0deg);background:radial-gradient(ellipse closest-side,rgba(45,12,55,0.25) 0%,transparent 100%)"></div>
<div style="left:460px;top:250px;width:1600px;height:620px;transform:rotate(17deg);background:radial-gradient(ellipse closest-side,rgba(70,18,52,0.85) 0%,transparent 100%)"></div>
<div style="left:700px;top:470px;width:1000px;height:360px;transform:rotate(6deg);background:radial-gradient(ellipse closest-side,rgba(100,28,62,0.6) 0%,transparent 100%)"></div>
<div style="left:700px;top:340px;width:500px;height:280px;transform:rotate(22deg);background:radial-gradient(ellipse closest-side,rgba(100,40,80,0.5) 0%,transparent 100%)"></div>
<div style="left:870px;top:340px;width:560px;height:200px;transform:rotate(18deg);background:radial-gradient(ellipse closest-side,rgba(120,50,110,0.45) 0%,transparent 100%)"></div>
<div style="left:830px;top:470px;width:200px;height:140px;transform:rotate(30deg);background:radial-gradient(ellipse closest-side,rgba(140,60,60,0.5) 0%,transparent 100%)"></div>
<div style="left:640px;top:550px;width:320px;height:180px;transform:rotate(0deg);background:radial-gradient(ellipse closest-side,rgba(30,36,24,0.5) 0%,transparent 100%)"></div>
<div style="left:900px;top:645px;width:700px;height:150px;transform:rotate(0deg);background:radial-gradient(ellipse closest-side,rgba(85,20,50,0.55) 0%,transparent 100%)"></div>
<div style="left:1660px;top:120px;width:900px;height:340px;transform:rotate(-38deg);background:radial-gradient(ellipse closest-side,rgba(92,18,72,0.75) 0%,transparent 100%)"></div>
<div style="left:2070px;top:50px;width:420px;height:300px;transform:rotate(-30deg);background:radial-gradient(ellipse closest-side,rgba(105,22,80,0.5) 0%,transparent 100%)"></div>
<div style="left:1810px;top:350px;width:300px;height:160px;transform:rotate(-45deg);background:radial-gradient(ellipse closest-side,rgba(130,30,95,0.45) 0%,transparent 100%)"></div>
<div style="left:2020px;top:360px;width:420px;height:440px;transform:rotate(0deg);background:radial-gradient(ellipse closest-side,rgba(55,14,48,0.7) 0%,transparent 100%)"></div>
<div style="left:1180px;top:0px;width:640px;height:440px;transform:rotate(0deg);background:radial-gradient(ellipse closest-side,rgba(3,2,5,0.9) 0%,transparent 100%)"></div>
<div style="left:170px;top:560px;width:760px;height:280px;transform:rotate(0deg);background:radial-gradient(ellipse closest-side,rgba(3,2,4,0.7) 0%,transparent 100%)"></div>

<div style="left:1550px;top:640px;width:300px;height:160px;transform:rotate(0deg);background:radial-gradient(ellipse closest-side,rgba(10,4,14,0.6) 0%,transparent 100%)"></div>
<div style="left:1830px;top:-40px;width:700px;height:560px;transform:rotate(-35deg);background:radial-gradient(ellipse closest-side,rgba(95,18,72,0.7) 0%,transparent 100%)"></div>
<div style="left:2060px;top:-60px;width:420px;height:420px;background:radial-gradient(ellipse closest-side,rgba(100,20,78,0.45) 0%,transparent 100%)"></div>
<div style="left:1100px;top:300px;width:700px;height:300px;transform:rotate(25deg);background:radial-gradient(ellipse closest-side,rgba(115,38,95,0.4) 0%,transparent 100%)"></div>
<div style="left:780px;top:-40px;width:200px;height:200px;background:radial-gradient(ellipse closest-side,rgba(60,15,80,0.5) 0%,transparent 100%)"></div><div style="left:1300px;top:-40px;width:320px;height:160px;background:radial-gradient(ellipse closest-side,rgba(55,15,70,0.45) 0%,transparent 100%)"></div>
<svg style="left:0;top:0" width="2320" height="760" viewBox="0 0 2320 760"><defs><filter id="f1" x="-20%" y="-20%" width="140%" height="140%"><feGaussianBlur stdDeviation="14"/></filter><filter id="f2" x="-20%" y="-20%" width="140%" height="140%"><feGaussianBlur stdDeviation="4"/></filter><filter id="f3" x="-20%" y="-20%" width="140%" height="140%"><feGaussianBlur stdDeviation="2"/></filter><filter id="f4" x="-100%" y="-100%" width="300%" height="300%"><feGaussianBlur stdDeviation="32"/></filter></defs><path d="M720 330 Q900 400 1050 385 Q1200 380 1300 450 Q1400 520 1500 580 Q1600 630 1750 670" stroke="rgba(140,55,125,0.35)" stroke-width="110" stroke-linecap="round" fill="none" filter="url(#f4)"/><path d="M720 320 Q900 390 1050 370 Q1200 360 1300 430 Q1400 500 1500 560 Q1600 610 1750 650" stroke="rgba(160,70,145,0.45)" stroke-width="34" stroke-linecap="round" fill="none" filter="url(#f1)"/><path d="M760 330 Q950 400 1080 380 Q1200 370 1290 430 Q1380 490 1470 540 Q1560 590 1700 640" stroke="rgba(215,150,205,0.55)" stroke-width="5" fill="none" filter="url(#f2)"/><path d="M800 360 Q980 420 1100 400 Q1220 395 1300 460 Q1390 520 1520 590" stroke="rgba(190,120,180,0.35)" stroke-width="4" fill="none" filter="url(#f2)"/><path d="M850 230 Q1050 260 1300 300 Q1450 340 1600 450 Q1720 540 1850 650" stroke="rgba(150,55,120,0.35)" stroke-width="60" stroke-linecap="round" fill="none" filter="url(#f4)"/><path d="M880 235 Q1060 265 1290 305 Q1440 345 1590 455 Q1710 545 1830 640" stroke="rgba(190,100,170,0.35)" stroke-width="4" fill="none" filter="url(#f2)"/><ellipse cx="2200" cy="380" rx="220" ry="160" transform="rotate(-35 2200 380)" fill="rgba(75,14,50,0.45)" filter="url(#f4)"/><path d="M1130 385 Q1240 410 1330 480" stroke="rgba(215,220,170,0.5)" stroke-width="6" fill="none" filter="url(#f2)"/><path d="M880 480 Q930 530 960 570" stroke="rgba(190,90,80,0.35)" stroke-width="14" fill="none" filter="url(#f1)"/><path d="M900 520 Q940 550 970 585" stroke="rgba(220,200,120,0.35)" stroke-width="4" fill="none" filter="url(#f2)"/><path d="M1840 510 Q1950 340 2120 260 Q2250 190 2320 120" stroke="rgba(130,30,100,0.4)" stroke-width="80" stroke-linecap="round" fill="none" filter="url(#f4)"/><path d="M1850 480 Q1930 370 2060 300 Q2150 250 2230 170" stroke="rgba(175,60,140,0.5)" stroke-width="6" fill="none" filter="url(#f2)"/><path d="M2000 250 Q2100 200 2200 120 Q2260 80 2320 40" stroke="rgba(130,35,105,0.3)" stroke-width="30" fill="none" filter="url(#f1)"/><ellipse cx="1895" cy="400" rx="70" ry="35" transform="rotate(-50 1895 400)" fill="rgba(5,4,14,0.7)" filter="url(#f1)"/><ellipse cx="2150" cy="560" rx="260" ry="230" fill="rgba(60,14,48,0.45)" filter="url(#f4)"/><path d="M1900 440 Q2000 330 2150 260" stroke="rgba(160,50,130,0.45)" stroke-width="16" fill="none" filter="url(#f1)"/><path d="M2000 300 Q2150 200 2320 90" stroke="rgba(170,60,140,0.4)" stroke-width="10" fill="none" filter="url(#f2)"/><circle cx="1050" cy="414" r="2" fill="#f0c0d8" opacity="0.53"/><circle cx="1984" cy="141" r="2" fill="#a8a0b8" opacity="0.54"/><circle cx="1424" cy="138" r="1.2" fill="#b0c0e0" opacity="0.37"/><circle cx="1250" cy="659" r="1.5" fill="#cfc8d8" opacity="0.60"/><circle cx="919" cy="335" r="1.5" fill="#a8a0b8" opacity="0.63"/><circle cx="1446" cy="615" r="1" fill="#cfc8d8" opacity="0.32"/><circle cx="2041" cy="444" r="2" fill="#f0c0d8" opacity="0.46"/><circle cx="1371" cy="145" r="1" fill="#d8a0c0" opacity="0.45"/><circle cx="11" cy="63" r="1.5" fill="#b0c0e0" opacity="0.50"/><circle cx="1279" cy="689" r="1" fill="#d8a0c0" opacity="0.43"/><circle cx="1759" cy="380" r="1" fill="#cfc8d8" opacity="0.58"/><circle cx="250" cy="80" r="1" fill="#f0c0d8" opacity="0.33"/><circle cx="39" cy="507" r="1" fill="#e0d0e8" opacity="0.76"/><circle cx="121" cy="278" r="1.5" fill="#f0c0d8" opacity="0.51"/><circle cx="1314" cy="147" r="1.5" fill="#b0c0e0" opacity="0.47"/><circle cx="722" cy="11" r="1.2" fill="#cfc8d8" opacity="0.37"/><circle cx="1640" cy="8" r="1.2" fill="#f0c0d8" opacity="0.39"/><circle cx="1298" cy="331" r="1" fill="#d8a0c0" opacity="0.68"/><circle cx="973" cy="284" r="1.2" fill="#f0c0d8" opacity="0.80"/><circle cx="1" cy="640" r="2" fill="#a8a0b8" opacity="0.45"/><circle cx="2053" cy="156" r="1.2" fill="#a8a0b8" opacity="0.62"/><circle cx="233" cy="732" r="1" fill="#f0c0d8" opacity="0.43"/><circle cx="1793" cy="243" r="1" fill="#f0c0d8" opacity="0.34"/><circle cx="209" cy="431" r="1" fill="#cfc8d8" opacity="0.60"/><circle cx="862" cy="335" r="1.5" fill="#f0c0d8" opacity="0.72"/><circle cx="315" cy="286" r="1.5" fill="#e0d0e8" opacity="0.46"/><circle cx="530" cy="452" r="1.5" fill="#e0d0e8" opacity="0.38"/><circle cx="1459" cy="410" r="1.5" fill="#f0c0d8" opacity="0.74"/><circle cx="1400" cy="312" r="1" fill="#cfc8d8" opacity="0.32"/><circle cx="2233" cy="176" r="1.5" fill="#f0c0d8" opacity="0.43"/><circle cx="1911" cy="441" r="1" fill="#a8a0b8" opacity="0.39"/><circle cx="1671" cy="51" r="1" fill="#f0c0d8" opacity="0.58"/><circle cx="1978" cy="455" r="1" fill="#e0d0e8" opacity="0.76"/><circle cx="473" cy="12" r="1" fill="#f0c0d8" opacity="0.52"/><circle cx="140" cy="130" r="1" fill="#a8a0b8" opacity="0.59"/><circle cx="305" cy="268" r="1.2" fill="#b0c0e0" opacity="0.63"/><circle cx="1604" cy="432" r="1" fill="#a8a0b8" opacity="0.32"/><circle cx="42" cy="674" r="1.5" fill="#b0c0e0" opacity="0.78"/><circle cx="49" cy="471" r="1.2" fill="#cfc8d8" opacity="0.67"/><circle cx="740" cy="740" r="1" fill="#f0c0d8" opacity="0.57"/><circle cx="1710" cy="666" r="1.5" fill="#d8a0c0" opacity="0.65"/><circle cx="1840" cy="677" r="1" fill="#cfc8d8" opacity="0.64"/><circle cx="2090" cy="645" r="1.2" fill="#cfc8d8" opacity="0.73"/><circle cx="1329" cy="462" r="1.2" fill="#f0c0d8" opacity="0.59"/><circle cx="1413" cy="59" r="1.5" fill="#cfc8d8" opacity="0.80"/><circle cx="2041" cy="539" r="1.2" fill="#d8a0c0" opacity="0.65"/><circle cx="1062" cy="342" r="1.5" fill="#cfc8d8" opacity="0.56"/><circle cx="1194" cy="230" r="1" fill="#f0c0d8" opacity="0.31"/><circle cx="2221" cy="84" r="2" fill="#a8a0b8" opacity="0.63"/><circle cx="1128" cy="663" r="1" fill="#b0c0e0" opacity="0.37"/><circle cx="1419" cy="384" r="2" fill="#b0c0e0" opacity="0.63"/><circle cx="1025" cy="660" r="1" fill="#f0c0d8" opacity="0.63"/><circle cx="461" cy="319" r="2" fill="#e0d0e8" opacity="0.74"/><circle cx="892" cy="431" r="1" fill="#e0d0e8" opacity="0.37"/><circle cx="1152" cy="619" r="2" fill="#cfc8d8" opacity="0.66"/><circle cx="2204" cy="205" r="1" fill="#cfc8d8" opacity="0.53"/><circle cx="638" cy="158" r="1.2" fill="#f0c0d8" opacity="0.61"/><circle cx="1146" cy="233" r="2" fill="#a8a0b8" opacity="0.53"/><circle cx="173" cy="23" r="2" fill="#a8a0b8" opacity="0.32"/><circle cx="1644" cy="422" r="1" fill="#d8a0c0" opacity="0.70"/><circle cx="44" cy="101" r="1.2" fill="#e0d0e8" opacity="0.31"/><circle cx="1925" cy="176" r="1" fill="#cfc8d8" opacity="0.79"/><circle cx="268" cy="81" r="1.5" fill="#d8a0c0" opacity="0.62"/><circle cx="855" cy="58" r="1" fill="#e0d0e8" opacity="0.71"/><circle cx="594" cy="529" r="2" fill="#f0c0d8" opacity="0.57"/><circle cx="84" cy="168" r="2" fill="#b0c0e0" opacity="0.57"/><circle cx="2197" cy="370" r="2" fill="#e0d0e8" opacity="0.50"/><circle cx="1837" cy="671" r="1" fill="#f0c0d8" opacity="0.77"/><circle cx="1676" cy="96" r="1.2" fill="#e0d0e8" opacity="0.61"/><circle cx="2111" cy="279" r="1.5" fill="#d8a0c0" opacity="0.74"/><circle cx="1848" cy="699" r="1.2" fill="#b0c0e0" opacity="0.63"/><circle cx="475" cy="534" r="2" fill="#d8a0c0" opacity="0.76"/><circle cx="286" cy="179" r="1.2" fill="#cfc8d8" opacity="0.79"/><circle cx="1246" cy="585" r="1" fill="#b0c0e0" opacity="0.75"/><circle cx="1985" cy="258" r="1" fill="#cfc8d8" opacity="0.52"/><circle cx="1277" cy="568" r="1.2" fill="#cfc8d8" opacity="0.41"/><circle cx="2013" cy="317" r="1" fill="#e0d0e8" opacity="0.57"/><circle cx="1593" cy="678" r="1.2" fill="#e0d0e8" opacity="0.80"/><circle cx="2089" cy="383" r="1.5" fill="#d8a0c0" opacity="0.52"/><circle cx="2041" cy="428" r="1.5" fill="#cfc8d8" opacity="0.68"/><circle cx="1019" cy="413" r="2" fill="#d8a0c0" opacity="0.58"/><circle cx="381" cy="381" r="1.5" fill="#b0c0e0" opacity="0.46"/><circle cx="884" cy="625" r="1.5" fill="#e0d0e8" opacity="0.45"/><circle cx="327" cy="403" r="1" fill="#a8a0b8" opacity="0.55"/><circle cx="954" cy="85" r="1" fill="#a8a0b8" opacity="0.49"/><circle cx="1249" cy="33" r="1.2" fill="#a8a0b8" opacity="0.70"/><circle cx="1306" cy="363" r="1.5" fill="#e0d0e8" opacity="0.33"/><circle cx="1250" cy="306" r="2" fill="#f0c0d8" opacity="0.43"/><circle cx="1098" cy="94" r="1.2" fill="#f0c0d8" opacity="0.56"/><circle cx="252" cy="310" r="1" fill="#b0c0e0" opacity="0.36"/><circle cx="1808" cy="17" r="1" fill="#e0d0e8" opacity="0.41"/><circle cx="1594" cy="238" r="1" fill="#e0d0e8" opacity="0.61"/><circle cx="243" cy="541" r="1" fill="#a8a0b8" opacity="0.61"/><circle cx="1665" cy="519" r="1.2" fill="#cfc8d8" opacity="0.49"/><circle cx="959" cy="392" r="1" fill="#a8a0b8" opacity="0.40"/><circle cx="1465" cy="472" r="1.5" fill="#e0d0e8" opacity="0.73"/><circle cx="1419" cy="634" r="1" fill="#d8a0c0" opacity="0.61"/><circle cx="806" cy="134" r="1.5" fill="#b0c0e0" opacity="0.75"/><circle cx="452" cy="576" r="1" fill="#cfc8d8" opacity="0.37"/><circle cx="555" cy="538" r="1" fill="#f0c0d8" opacity="0.35"/><circle cx="1931" cy="312" r="2" fill="#d8a0c0" opacity="0.36"/><circle cx="934" cy="507" r="1" fill="#cfc8d8" opacity="0.40"/><circle cx="1583" cy="674" r="1" fill="#cfc8d8" opacity="0.65"/><circle cx="1472" cy="254" r="1.5" fill="#e0d0e8" opacity="0.70"/><circle cx="1118" cy="18" r="2" fill="#a8a0b8" opacity="0.61"/><circle cx="2100" cy="356" r="1" fill="#e0d0e8" opacity="0.36"/><circle cx="400" cy="117" r="1" fill="#d8a0c0" opacity="0.35"/><circle cx="144" cy="704" r="1.2" fill="#cfc8d8" opacity="0.68"/><circle cx="758" cy="346" r="1.5" fill="#b0c0e0" opacity="0.52"/><circle cx="1394" cy="10" r="1.5" fill="#cfc8d8" opacity="0.72"/><circle cx="421" cy="336" r="1.5" fill="#b0c0e0" opacity="0.50"/><circle cx="453" cy="122" r="1.5" fill="#cfc8d8" opacity="0.46"/><circle cx="197" cy="623" r="2" fill="#d8a0c0" opacity="0.77"/><circle cx="1322" cy="141" r="1.5" fill="#b0c0e0" opacity="0.70"/><circle cx="599" cy="674" r="1.5" fill="#d8a0c0" opacity="0.69"/><circle cx="1890" cy="300" r="1" fill="#a8a0b8" opacity="0.65"/><circle cx="1780" cy="566" r="1.2" fill="#e0d0e8" opacity="0.66"/><circle cx="164" cy="253" r="1.2" fill="#cfc8d8" opacity="0.31"/><circle cx="825" cy="473" r="1.5" fill="#cfc8d8" opacity="0.42"/><circle cx="2192" cy="493" r="1" fill="#e0d0e8" opacity="0.63"/><circle cx="1321" cy="394" r="1.2" fill="#a8a0b8" opacity="0.80"/><circle cx="1490" cy="519" r="2" fill="#f0c0d8" opacity="0.79"/><circle cx="53" cy="455" r="1.5" fill="#e0d0e8" opacity="0.43"/><circle cx="932" cy="37" r="1" fill="#d8a0c0" opacity="0.49"/><circle cx="228" cy="186" r="1" fill="#a8a0b8" opacity="0.57"/><circle cx="964" cy="385" r="2" fill="#cfc8d8" opacity="0.62"/><circle cx="1878" cy="56" r="1.5" fill="#d8a0c0" opacity="0.68"/><circle cx="105" cy="688" r="1" fill="#f0c0d8" opacity="0.54"/><circle cx="392" cy="367" r="1.5" fill="#a8a0b8" opacity="0.33"/><circle cx="2193" cy="311" r="1.5" fill="#f0c0d8" opacity="0.60"/><circle cx="848" cy="211" r="1.5" fill="#b0c0e0" opacity="0.58"/><circle cx="658" cy="530" r="1" fill="#cfc8d8" opacity="0.31"/><circle cx="568" cy="32" r="1" fill="#f0c0d8" opacity="0.68"/><circle cx="905" cy="664" r="1.5" fill="#f0c0d8" opacity="0.33"/><circle cx="2294" cy="699" r="1" fill="#e0d0e8" opacity="0.51"/><circle cx="1108" cy="720" r="1" fill="#cfc8d8" opacity="0.56"/><circle cx="2174" cy="535" r="1.2" fill="#e0d0e8" opacity="0.79"/><circle cx="1895" cy="447" r="1" fill="#cfc8d8" opacity="0.61"/><circle cx="1057" cy="151" r="1" fill="#b0c0e0" opacity="0.56"/><circle cx="288" cy="328" r="1.5" fill="#f0c0d8" opacity="0.53"/><circle cx="608" cy="431" r="1.2" fill="#b0c0e0" opacity="0.69"/><circle cx="1231" cy="738" r="1" fill="#d8a0c0" opacity="0.36"/><circle cx="1116" cy="372" r="1" fill="#a8a0b8" opacity="0.61"/><circle cx="833" cy="201" r="1.5" fill="#d8a0c0" opacity="0.58"/><circle cx="1373" cy="468" r="2" fill="#e0d0e8" opacity="0.39"/><circle cx="578" cy="725" r="1" fill="#d8a0c0" opacity="0.32"/><circle cx="141" cy="200" r="1.2" fill="#cfc8d8" opacity="0.61"/><circle cx="238" cy="401" r="1" fill="#cfc8d8" opacity="0.76"/><circle cx="373" cy="174" r="1" fill="#f0c0d8" opacity="0.54"/><circle cx="489" cy="254" r="1.5" fill="#e0d0e8" opacity="0.72"/><circle cx="172" cy="89" r="2" fill="#a8a0b8" opacity="0.72"/><circle cx="1784" cy="329" r="1.5" fill="#b0c0e0" opacity="0.50"/><circle cx="350" cy="114" r="2" fill="#a8a0b8" opacity="0.46"/><circle cx="1273" cy="552" r="1" fill="#f0c0d8" opacity="0.63"/><circle cx="1347" cy="342" r="1" fill="#cfc8d8" opacity="0.57"/><circle cx="1002" cy="420" r="2" fill="#d8a0c0" opacity="0.53"/><circle cx="1911" cy="7" r="1" fill="#e0d0e8" opacity="0.76"/><circle cx="1401" cy="514" r="1.2" fill="#d8a0c0" opacity="0.68"/><circle cx="761" cy="652" r="1" fill="#b0c0e0" opacity="0.63"/><circle cx="759" cy="671" r="1" fill="#d8a0c0" opacity="0.52"/><circle cx="1380" cy="668" r="1.5" fill="#b0c0e0" opacity="0.52"/><circle cx="1863" cy="226" r="1" fill="#e0d0e8" opacity="0.50"/><circle cx="2168" cy="662" r="1" fill="#cfc8d8" opacity="0.48"/><circle cx="848" cy="269" r="1.2" fill="#a8a0b8" opacity="0.49"/><circle cx="452" cy="417" r="2" fill="#f0c0d8" opacity="0.57"/><circle cx="1940" cy="416" r="1" fill="#cfc8d8" opacity="0.68"/><circle cx="2044" cy="208" r="1" fill="#e0d0e8" opacity="0.56"/><circle cx="1262" cy="420" r="1" fill="#d8a0c0" opacity="0.72"/><circle cx="981" cy="431" r="1" fill="#a8a0b8" opacity="0.34"/><circle cx="189" cy="545" r="1" fill="#cfc8d8" opacity="0.31"/><circle cx="1516" cy="72" r="2" fill="#d8a0c0" opacity="0.51"/><circle cx="1652" cy="362" r="1.5" fill="#b0c0e0" opacity="0.68"/><circle cx="915" cy="250" r="1" fill="#d8a0c0" opacity="0.37"/><circle cx="1132" cy="596" r="1" fill="#d8a0c0" opacity="0.61"/><circle cx="107" cy="560" r="1.5" fill="#b0c0e0" opacity="0.73"/><circle cx="1870" cy="617" r="1.2" fill="#a8a0b8" opacity="0.62"/><circle cx="1215" cy="525" r="2" fill="#cfc8d8" opacity="0.51"/><circle cx="975" cy="108" r="1.5" fill="#e0d0e8" opacity="0.80"/><circle cx="871" cy="124" r="1" fill="#f0c0d8" opacity="0.51"/><circle cx="677" cy="718" r="1" fill="#f0c0d8" opacity="0.45"/><circle cx="266" cy="480" r="2" fill="#e0d0e8" opacity="0.76"/><circle cx="1747" cy="13" r="1.2" fill="#cfc8d8" opacity="0.46"/><circle cx="458" cy="266" r="1.5" fill="#e0d0e8" opacity="0.60"/><circle cx="1095" cy="376" r="1.2" fill="#e0d0e8" opacity="0.75"/><circle cx="934" cy="674" r="1" fill="#d8a0c0" opacity="0.57"/><circle cx="1896" cy="355" r="1" fill="#f0c0d8" opacity="0.74"/><circle cx="2121" cy="253" r="1.5" fill="#cfc8d8" opacity="0.54"/><circle cx="513" cy="37" r="1" fill="#f0c0d8" opacity="0.79"/><circle cx="1844" cy="573" r="2" fill="#cfc8d8" opacity="0.63"/><circle cx="551" cy="8" r="1.2" fill="#b0c0e0" opacity="0.53"/><circle cx="572" cy="312" r="2" fill="#e0d0e8" opacity="0.51"/><circle cx="1791" cy="107" r="2" fill="#a8a0b8" opacity="0.37"/><circle cx="1721" cy="458" r="1.5" fill="#a8a0b8" opacity="0.33"/><circle cx="1327" cy="132" r="1" fill="#e0d0e8" opacity="0.71"/><circle cx="191" cy="200" r="1.5" fill="#a8a0b8" opacity="0.35"/><circle cx="1114" cy="347" r="1.5" fill="#a8a0b8" opacity="0.57"/><circle cx="1174" cy="14" r="1" fill="#f0c0d8" opacity="0.40"/><circle cx="1583" cy="578" r="1.2" fill="#e0d0e8" opacity="0.32"/><circle cx="959" cy="366" r="2" fill="#b0c0e0" opacity="0.46"/><circle cx="941" cy="412" r="1.2" fill="#d8a0c0" opacity="0.66"/><circle cx="835" cy="508" r="1" fill="#d8a0c0" opacity="0.50"/><circle cx="1071" cy="716" r="2" fill="#cfc8d8" opacity="0.63"/><circle cx="29" cy="279" r="1.5" fill="#f0c0d8" opacity="0.42"/><circle cx="1309" cy="339" r="1" fill="#d8a0c0" opacity="0.40"/><circle cx="1429" cy="215" r="1.2" fill="#a8a0b8" opacity="0.67"/><circle cx="2213" cy="559" r="1.5" fill="#d8a0c0" opacity="0.34"/><circle cx="438" cy="279" r="1" fill="#b0c0e0" opacity="0.45"/><circle cx="635" cy="348" r="1.5" fill="#b0c0e0" opacity="0.52"/><circle cx="887" cy="75" r="1.5" fill="#cfc8d8" opacity="0.37"/><circle cx="1463" cy="133" r="1" fill="#f0c0d8" opacity="0.32"/><circle cx="1075" cy="521" r="1" fill="#e0d0e8" opacity="0.32"/><circle cx="2291" cy="321" r="2" fill="#cfc8d8" opacity="0.47"/><circle cx="1910" cy="686" r="1" fill="#d8a0c0" opacity="0.40"/><circle cx="343" cy="512" r="1.2" fill="#b0c0e0" opacity="0.76"/><circle cx="1445" cy="538" r="1.5" fill="#d8a0c0" opacity="0.46"/><circle cx="1830" cy="181" r="1.5" fill="#a8a0b8" opacity="0.31"/><circle cx="768" cy="253" r="1.5" fill="#f0c0d8" opacity="0.35"/><circle cx="876" cy="377" r="2" fill="#b0c0e0" opacity="0.71"/><circle cx="1419" cy="117" r="2" fill="#a8a0b8" opacity="0.75"/><circle cx="1272" cy="261" r="1.5" fill="#a8a0b8" opacity="0.37"/><circle cx="1655" cy="730" r="1.5" fill="#d8a0c0" opacity="0.65"/><circle cx="2171" cy="420" r="1" fill="#d8a0c0" opacity="0.63"/><circle cx="1802" cy="101" r="1.2" fill="#a8a0b8" opacity="0.51"/><circle cx="774" cy="68" r="2" fill="#b0c0e0" opacity="0.43"/><circle cx="2049" cy="335" r="1.5" fill="#e0d0e8" opacity="0.42"/><circle cx="1321" cy="404" r="1" fill="#a8a0b8" opacity="0.76"/><circle cx="391" cy="552" r="2" fill="#b0c0e0" opacity="0.60"/><circle cx="285" cy="610" r="1" fill="#d8a0c0" opacity="0.75"/><circle cx="559" cy="424" r="2" fill="#e0d0e8" opacity="0.39"/><circle cx="1271" cy="56" r="1" fill="#f0c0d8" opacity="0.39"/><circle cx="2290" cy="695" r="1.5" fill="#e0d0e8" opacity="0.45"/><circle cx="1557" cy="546" r="1.2" fill="#a8a0b8" opacity="0.60"/><circle cx="1865" cy="12" r="1" fill="#f0c0d8" opacity="0.53"/><circle cx="332" cy="286" r="1.5" fill="#f0c0d8" opacity="0.39"/><circle cx="1206" cy="195" r="1.5" fill="#b0c0e0" opacity="0.33"/><circle cx="1819" cy="534" r="2" fill="#e0d0e8" opacity="0.50"/><circle cx="1154" cy="76" r="1" fill="#f0c0d8" opacity="0.75"/><circle cx="2118" cy="418" r="1.2" fill="#b0c0e0" opacity="0.54"/><circle cx="2308" cy="620" r="2" fill="#d8a0c0" opacity="0.50"/><circle cx="1007" cy="419" r="1.5" fill="#b0c0e0" opacity="0.56"/><circle cx="1003" cy="669" r="1" fill="#cfc8d8" opacity="0.45"/><circle cx="1430" cy="321" r="1.2" fill="#a8a0b8" opacity="0.46"/><circle cx="1832" cy="653" r="1" fill="#e0d0e8" opacity="0.36"/><circle cx="1037" cy="372" r="1.2" fill="#cfc8d8" opacity="0.54"/><circle cx="244" cy="673" r="1.5" fill="#b0c0e0" opacity="0.63"/><circle cx="2181" cy="651" r="1.5" fill="#d8a0c0" opacity="0.48"/><circle cx="1267" cy="417" r="1" fill="#e0d0e8" opacity="0.62"/><circle cx="978" cy="91" r="1" fill="#cfc8d8" opacity="0.56"/><circle cx="301" cy="653" r="1.5" fill="#f0c0d8" opacity="0.30"/><circle cx="566" cy="221" r="1" fill="#e0d0e8" opacity="0.33"/><circle cx="2077" cy="603" r="1.2" fill="#e0d0e8" opacity="0.48"/><circle cx="1358" cy="34" r="1" fill="#f0c0d8" opacity="0.75"/><circle cx="714" cy="369" r="2" fill="#f0c0d8" opacity="0.74"/><circle cx="470" cy="636" r="1.5" fill="#cfc8d8" opacity="0.40"/><circle cx="1944" cy="262" r="1.2" fill="#cfc8d8" opacity="0.39"/><circle cx="2041" cy="737" r="1" fill="#a8a0b8" opacity="0.62"/><circle cx="444" cy="651" r="1" fill="#d8a0c0" opacity="0.35"/><circle cx="1684" cy="232" r="1" fill="#f0c0d8" opacity="0.66"/><circle cx="313" cy="515" r="2" fill="#f0c0d8" opacity="0.51"/><circle cx="393" cy="638" r="1" fill="#d8a0c0" opacity="0.65"/><circle cx="397" cy="424" r="1.6" fill="#e8e0e8" opacity="0.63"/><circle cx="449" cy="147" r="1.6" fill="#e8e0e8" opacity="0.56"/><circle cx="528" cy="338" r="1.3" fill="#e8e0e8" opacity="0.75"/><circle cx="456" cy="321" r="1" fill="#e8e0e8" opacity="0.62"/><circle cx="709" cy="418" r="1.3" fill="#e8e0e8" opacity="0.76"/><circle cx="654" cy="357" r="1" fill="#e8e0e8" opacity="0.60"/><circle cx="400" cy="332" r="1.6" fill="#e8e0e8" opacity="0.34"/><circle cx="376" cy="430" r="1" fill="#e8e0e8" opacity="0.39"/><circle cx="417" cy="224" r="1" fill="#e8e0e8" opacity="0.79"/><circle cx="551" cy="276" r="1.6" fill="#e8e0e8" opacity="0.49"/><circle cx="548" cy="194" r="1" fill="#e8e0e8" opacity="0.33"/><circle cx="464" cy="12" r="1.3" fill="#e8e0e8" opacity="0.63"/><circle cx="450" cy="120" r="1.6" fill="#e8e0e8" opacity="0.71"/><circle cx="192" cy="14" r="1.6" fill="#e8e0e8" opacity="0.78"/><circle cx="516" cy="420" r="1" fill="#e8e0e8" opacity="0.36"/><circle cx="256" cy="314" r="1.6" fill="#e8e0e8" opacity="0.69"/><circle cx="468" cy="60" r="1" fill="#e8e0e8" opacity="0.43"/><circle cx="194" cy="191" r="1.6" fill="#e8e0e8" opacity="0.55"/><circle cx="578" cy="283" r="1.6" fill="#e8e0e8" opacity="0.33"/><circle cx="185" cy="322" r="1.3" fill="#e8e0e8" opacity="0.38"/><circle cx="560" cy="264" r="1.3" fill="#e8e0e8" opacity="0.55"/><circle cx="380" cy="36" r="1" fill="#e8e0e8" opacity="0.34"/><circle cx="550" cy="172" r="1.6" fill="#e8e0e8" opacity="0.59"/><circle cx="391" cy="99" r="1" fill="#e8e0e8" opacity="0.46"/><circle cx="521" cy="275" r="1.6" fill="#e8e0e8" opacity="0.67"/><circle cx="459" cy="66" r="1.3" fill="#e8e0e8" opacity="0.34"/><circle cx="452" cy="189" r="1.3" fill="#e8e0e8" opacity="0.42"/><circle cx="244" cy="253" r="1.6" fill="#e8e0e8" opacity="0.69"/><circle cx="534" cy="292" r="1.3" fill="#e8e0e8" opacity="0.65"/><circle cx="334" cy="-15" r="1" fill="#e8e0e8" opacity="0.54"/><circle cx="445" cy="-71" r="1" fill="#e8e0e8" opacity="0.67"/><circle cx="74" cy="206" r="1" fill="#e8e0e8" opacity="0.42"/><circle cx="471" cy="211" r="1.3" fill="#e8e0e8" opacity="0.58"/><circle cx="143" cy="295" r="1" fill="#e8e0e8" opacity="0.64"/><circle cx="353" cy="-44" r="1.6" fill="#e8e0e8" opacity="0.41"/><circle cx="417" cy="389" r="1" fill="#e8e0e8" opacity="0.51"/><circle cx="494" cy="291" r="1.3" fill="#e8e0e8" opacity="0.47"/><circle cx="584" cy="232" r="1" fill="#e8e0e8" opacity="0.38"/><circle cx="86" cy="68" r="1.6" fill="#e8e0e8" opacity="0.47"/><circle cx="338" cy="43" r="1.6" fill="#e8e0e8" opacity="0.76"/><circle cx="525" cy="446" r="1" fill="#e8e0e8" opacity="0.49"/><circle cx="436" cy="175" r="1.3" fill="#e8e0e8" opacity="0.42"/><circle cx="478" cy="59" r="1.3" fill="#e8e0e8" opacity="0.40"/><circle cx="450" cy="370" r="1.3" fill="#e8e0e8" opacity="0.54"/><circle cx="252" cy="259" r="1" fill="#e8e0e8" opacity="0.73"/><circle cx="453" cy="354" r="1" fill="#e8e0e8" opacity="0.32"/><circle cx="372" cy="514" r="1.6" fill="#e8e0e8" opacity="0.31"/><circle cx="459" cy="328" r="1.3" fill="#e8e0e8" opacity="0.58"/><circle cx="370" cy="188" r="1" fill="#e8e0e8" opacity="0.48"/><circle cx="581" cy="462" r="1.3" fill="#e8e0e8" opacity="0.37"/><circle cx="433" cy="460" r="1" fill="#e8e0e8" opacity="0.31"/><circle cx="368" cy="347" r="1" fill="#e8e0e8" opacity="0.73"/><circle cx="352" cy="307" r="1.6" fill="#e8e0e8" opacity="0.63"/><circle cx="367" cy="392" r="1.3" fill="#e8e0e8" opacity="0.32"/><circle cx="514" cy="370" r="1" fill="#e8e0e8" opacity="0.40"/><circle cx="304" cy="317" r="1.6" fill="#e8e0e8" opacity="0.37"/><circle cx="395" cy="168" r="1.6" fill="#e8e0e8" opacity="0.53"/><circle cx="243" cy="408" r="1.3" fill="#e8e0e8" opacity="0.57"/><circle cx="358" cy="269" r="1.6" fill="#e8e0e8" opacity="0.73"/><circle cx="435" cy="340" r="1.3" fill="#e8e0e8" opacity="0.61"/><circle cx="568" cy="415" r="1.6" fill="#e8e0e8" opacity="0.62"/><circle cx="220" cy="169" r="1.6" fill="#e8e0e8" opacity="0.45"/><circle cx="291" cy="33" r="1" fill="#e8e0e8" opacity="0.58"/><circle cx="383" cy="295" r="1.3" fill="#e8e0e8" opacity="0.42"/><circle cx="385" cy="215" r="1.3" fill="#e8e0e8" opacity="0.36"/><circle cx="281" cy="256" r="1.3" fill="#e8e0e8" opacity="0.44"/><circle cx="395" cy="175" r="1.3" fill="#e8e0e8" opacity="0.40"/><circle cx="433" cy="148" r="1.6" fill="#e8e0e8" opacity="0.42"/><circle cx="512" cy="306" r="1.3" fill="#e8e0e8" opacity="0.70"/><circle cx="328" cy="262" r="1.6" fill="#e8e0e8" opacity="0.45"/><circle cx="643" cy="129" r="1" fill="#e8e0e8" opacity="0.48"/><circle cx="533" cy="293" r="1" fill="#e8e0e8" opacity="0.49"/><circle cx="478" cy="174" r="1.6" fill="#e8e0e8" opacity="0.46"/><circle cx="419" cy="274" r="1.3" fill="#e8e0e8" opacity="0.46"/><circle cx="349" cy="316" r="1.6" fill="#e8e0e8" opacity="0.74"/><circle cx="346" cy="166" r="1.3" fill="#e8e0e8" opacity="0.78"/><circle cx="318" cy="360" r="1" fill="#e8e0e8" opacity="0.69"/><circle cx="304" cy="140" r="1.3" fill="#e8e0e8" opacity="0.61"/><circle cx="462" cy="266" r="1.3" fill="#e8e0e8" opacity="0.74"/><circle cx="226" cy="413" r="1" fill="#e8e0e8" opacity="0.70"/><circle cx="381" cy="170" r="1.3" fill="#e8e0e8" opacity="0.48"/><circle cx="488" cy="241" r="1" fill="#e8e0e8" opacity="0.43"/><circle cx="416" cy="327" r="1.6" fill="#e8e0e8" opacity="0.30"/><circle cx="304" cy="220" r="1" fill="#e8e0e8" opacity="0.57"/><circle cx="539" cy="98" r="1" fill="#e8e0e8" opacity="0.61"/><circle cx="210" cy="173" r="1.3" fill="#e8e0e8" opacity="0.43"/><circle cx="439" cy="263" r="1.6" fill="#e8e0e8" opacity="0.40"/><circle cx="364" cy="289" r="1" fill="#e8e0e8" opacity="0.71"/><circle cx="510" cy="379" r="1.3" fill="#e8e0e8" opacity="0.70"/><circle cx="386" cy="360" r="1.3" fill="#e8e0e8" opacity="0.67"/><circle cx="1120" cy="541" r="1" fill="#f0b0d0" opacity="0.48"/><circle cx="1148" cy="302" r="1.8" fill="#f0b0d0" opacity="0.36"/><circle cx="1387" cy="578" r="1" fill="#f0b0d0" opacity="0.74"/><circle cx="1121" cy="777" r="1.8" fill="#f0b0d0" opacity="0.69"/><circle cx="1152" cy="569" r="1.3" fill="#f0b0d0" opacity="0.73"/><circle cx="1481" cy="590" r="1.8" fill="#f0b0d0" opacity="0.67"/><circle cx="1234" cy="474" r="1.8" fill="#f0b0d0" opacity="0.43"/><circle cx="1252" cy="456" r="1.3" fill="#f0b0d0" opacity="0.73"/><circle cx="1390" cy="708" r="1" fill="#f0b0d0" opacity="0.58"/><circle cx="956" cy="650" r="1.8" fill="#f0b0d0" opacity="0.67"/><circle cx="1282" cy="631" r="1" fill="#f0b0d0" opacity="0.49"/><circle cx="1212" cy="484" r="1" fill="#f0b0d0" opacity="0.79"/><circle cx="921" cy="593" r="1" fill="#f0b0d0" opacity="0.43"/><circle cx="1275" cy="651" r="1.8" fill="#f0b0d0" opacity="0.50"/><circle cx="1985" cy="414" r="1" fill="#f0b0d0" opacity="0.38"/><circle cx="1806" cy="556" r="1" fill="#f0b0d0" opacity="0.44"/><circle cx="1207" cy="181" r="1" fill="#f0b0d0" opacity="0.50"/><circle cx="1691" cy="432" r="1.3" fill="#f0b0d0" opacity="0.39"/><circle cx="1545" cy="613" r="1.8" fill="#f0b0d0" opacity="0.44"/><circle cx="1031" cy="665" r="1" fill="#f0b0d0" opacity="0.79"/><circle cx="1005" cy="678" r="1.8" fill="#f0b0d0" opacity="0.44"/><circle cx="1481" cy="464" r="1" fill="#f0b0d0" opacity="0.58"/><circle cx="1711" cy="410" r="1.3" fill="#f0b0d0" opacity="0.36"/><circle cx="1278" cy="581" r="1.8" fill="#f0b0d0" opacity="0.58"/><circle cx="1262" cy="680" r="1.3" fill="#f0b0d0" opacity="0.41"/><circle cx="1063" cy="573" r="1.3" fill="#f0b0d0" opacity="0.58"/><circle cx="1317" cy="572" r="1.3" fill="#f0b0d0" opacity="0.64"/><circle cx="1526" cy="563" r="1" fill="#f0b0d0" opacity="0.80"/><circle cx="1449" cy="790" r="1.3" fill="#f0b0d0" opacity="0.32"/><circle cx="1109" cy="684" r="1.8" fill="#f0b0d0" opacity="0.33"/><circle cx="953" cy="505" r="1.8" fill="#f0b0d0" opacity="0.43"/><circle cx="1378" cy="652" r="1" fill="#f0b0d0" opacity="0.80"/><circle cx="856" cy="639" r="1.8" fill="#f0b0d0" opacity="0.32"/><circle cx="1675" cy="334" r="1.8" fill="#f0b0d0" opacity="0.36"/><circle cx="1510" cy="611" r="1.8" fill="#f0b0d0" opacity="0.46"/><circle cx="1264" cy="558" r="1" fill="#f0b0d0" opacity="0.33"/><circle cx="1019" cy="714" r="1.3" fill="#f0b0d0" opacity="0.71"/><circle cx="1407" cy="371" r="1.3" fill="#f0b0d0" opacity="0.45"/><circle cx="937" cy="525" r="1" fill="#f0b0d0" opacity="0.77"/><circle cx="824" cy="586" r="1.3" fill="#f0b0d0" opacity="0.43"/><circle cx="1346" cy="546" r="1.8" fill="#f0b0d0" opacity="0.37"/><circle cx="1121" cy="732" r="1.8" fill="#f0b0d0" opacity="0.63"/><circle cx="1389" cy="454" r="1.8" fill="#f0b0d0" opacity="0.52"/><circle cx="1265" cy="601" r="1.8" fill="#f0b0d0" opacity="0.46"/><circle cx="1487" cy="620" r="1.8" fill="#f0b0d0" opacity="0.39"/><circle cx="1427" cy="578" r="1.3" fill="#f0b0d0" opacity="0.64"/><circle cx="1352" cy="611" r="1" fill="#f0b0d0" opacity="0.49"/><circle cx="1322" cy="583" r="1.3" fill="#f0b0d0" opacity="0.55"/><circle cx="1119" cy="620" r="1.8" fill="#f0b0d0" opacity="0.72"/><circle cx="1304" cy="535" r="1" fill="#f0b0d0" opacity="0.46"/><circle cx="1303" cy="503" r="1.3" fill="#f0b0d0" opacity="0.52"/><circle cx="1471" cy="540" r="1.3" fill="#f0b0d0" opacity="0.69"/><circle cx="1648" cy="418" r="1" fill="#f0b0d0" opacity="0.64"/><circle cx="1509" cy="526" r="1" fill="#f0b0d0" opacity="0.69"/><circle cx="1265" cy="557" r="1.8" fill="#f0b0d0" opacity="0.62"/><circle cx="1041" cy="680" r="1" fill="#f0b0d0" opacity="0.61"/><circle cx="1149" cy="667" r="1.8" fill="#f0b0d0" opacity="0.61"/><circle cx="976" cy="555" r="1" fill="#f0b0d0" opacity="0.36"/><circle cx="1271" cy="362" r="1.3" fill="#f0b0d0" opacity="0.63"/><circle cx="1085" cy="617" r="1" fill="#f0b0d0" opacity="0.49"/></svg>
</div>
<svg style="left:0;top:0" width="2320" height="760" viewBox="0 0 2320 760"><polyline points="0,754 201,754 201,752 433,752 433,750 665,750 665,748 897,748 897,746 1129,746 1129,744 1361,744 1361,742 1593,742 1593,740 1825,740 1825,738 2057,738 2057,736 2289,736 2289,734 2320,734" stroke="#4a90e8" stroke-width="3" fill="none"/></svg>
<!-- view cube -->
<div style="left:2105px;top:119px;width:116px;height:116px;border-radius:30% 30% 50% 50% / 22% 22% 58% 58%;background:rgba(175,165,175,0.72)"></div>
<div style="left:2117px;top:140px;width:96px;height:94px;border-radius:50%;background:rgba(165,158,165,0.6)"></div>
<div style="left:2196px;top:120px;width:1.5px;height:70px;background:rgba(150,220,160,0.75)"></div>
<div style="left:2126px;top:190px;width:70px;height:1.5px;background:rgba(160,180,230,0.7)"></div>
<div style="left:2196px;top:190px;width:1.5px;height:52px;background:rgba(225,110,125,0.85);transform-origin:top;transform:rotate(-28deg)"></div>
<div class="t" style="left:2131px;top:174px;font-size:21px;color:#5a5a5a">Right</div>
<div class="t" style="left:2187px;top:99px;font-size:16px;color:#7ee08a">Y</div>
<div class="t" style="left:2110px;top:181px;font-size:16px;color:#8aa8f0">Z</div>
<div class="t" style="left:2211px;top:236px;font-size:16px;color:#e06070">X</div>
<!-- gui buttons -->
<div style="left:37px;top:812px;width:370px;height:140px;border-radius:23px;background:#98f2f6;border:10px solid #2b4ae6"></div>
<div style="left:37px;top:995px;width:370px;height:140px;border-radius:23px;background:#7df266;border:10px solid #53a447"></div>
</div>

<div style="left:3318px;top:322px;width:8px;height:1894px;background:#3e3e3e"></div>

<!-- button texts -->
<div class="bt" style="left:1031px;top:1215px;width:370px">RETURN TO</div>
<div class="bt" style="left:1009px;top:1255px;width:370px">CHECKPOINT</div>
<svg style="left:1319px;top:1258px" width="26" height="38" viewBox="0 0 26 38"><rect x="1" y="1" width="24" height="36" rx="2" fill="#b8674a"/><rect x="1" y="1" width="24" height="36" rx="2" fill="none" stroke="#8a4530" stroke-width="1.5"/><rect x="5" y="5" width="16" height="11" fill="none" stroke="#8a4530" stroke-width="1.5"/><rect x="5" y="22" width="16" height="4" fill="none" stroke="#8a4530" stroke-width="1.5"/><rect x="5" y="29" width="16" height="4" fill="none" stroke="#8a4530" stroke-width="1.5"/><circle cx="5" cy="19" r="1.4" fill="#f0c040"/></svg>
<div class="bt" style="left:1076px;top:1418px;width:230px">OPEN SHOP</div>
<svg style="left:1304px;top:1418px" width="38" height="40" viewBox="0 0 38 40"><path d="M5 10 Q6 2 12 2 Q18 2 19 10" stroke="#e8a030" stroke-width="2" fill="none"/><path d="M1 10 H21 V33 H1Z" fill="#c83a48"/><path d="M15 15 Q16 7 23 7 Q30 7 31 15" stroke="#e8b040" stroke-width="2" fill="none"/><path d="M14 15 H36 V39 H14Z" fill="#6a4aa8"/></svg>
<!-- ===== RIGHT ===== -->
<div style="left:3326px;top:322px;width:732px;height:1894px;background:#2c2c2c"></div>
<!-- explorer -->
<div style="left:3328px;top:324px;width:729px;height:46px;background:#363636;border:1px solid #232323"></div>
<div class="t" style="left:3328px;top:333px;width:660px;text-align:center;font-size:24px;color:#bdbdbd">Explorer (v0.359)</div>
<svg style="left:3982px;top:336px" width="28" height="28" viewBox="0 0 28 28"><path d="M10.7 13 H7 Q5 13 5 15 V21 Q5 23 7 23 H13 Q15 23 15 21 V18.4" stroke="#fff" stroke-width="2.1" fill="none" stroke-linecap="round"/><path d="M23.1 4.6 L16 11.7" stroke="#eee" stroke-width="2.1" stroke-linecap="round"/><path d="M11.9 6 V15.7 H21.7Z" fill="#eee"/></svg>
<svg style="left:4020px;top:340px" width="20" height="20" viewBox="0 0 20 20"><path d="M4 4 L16 16 M16 4 L4 16" stroke="#eee" stroke-width="2.3" stroke-linecap="round"/></svg>
<div style="left:3328px;top:370px;width:729px;height:951px;background:#2e2e2e"></div>
<div style="left:3338px;top:380px;width:646px;height:52px;border-radius:14px;background:#3c3c3f"></div>
<div class="t" style="left:3349px;top:390px;font-size:26px;color:#a8a8a8">Search</div>
<svg style="left:3942px;top:390px" width="32" height="32" viewBox="0 0 32 32"><path d="M5 11 A12.5 12.5 0 1 1 4 17" stroke="#eee" stroke-width="2.4" fill="none" stroke-linecap="round"/><path d="M2 8 L5 12 L9 9" stroke="#eee" stroke-width="2.4" fill="none" stroke-linecap="round" stroke-linejoin="round"/><path d="M16 9 V17 H21" stroke="#eee" stroke-width="2.4" fill="none" stroke-linecap="round"/></svg>
<div style="left:3994px;top:380px;width:52px;height:52px;border-radius:14px;background:#3c3c3f"></div>
<svg style="left:4005px;top:401px" width="30" height="10" viewBox="0 0 30 10"><circle cx="6" cy="5" r="2.3" fill="#eee"/><circle cx="15" cy="5" r="2.3" fill="#eee"/><circle cx="24" cy="5" r="2.3" fill="#eee"/></svg>
<div style="left:3338px;top:442px;width:719px;height:1.5px;background:#3c3c3c"></div>
<div style="left:3350px;top:757px;width:2px;height:280px;background:#3e3e3e"></div>
<div style="left:3374px;top:877px;width:2px;height:160px;background:#3e3e3e"></div>
<div style="left:3350px;top:1077px;width:2px;height:240px;background:#3e3e3e"></div>
<div style="left:3374px;top:1117px;width:2px;height:200px;background:#3e3e3e"></div>
<div style="left:3398px;top:1157px;width:2px;height:160px;background:#3e3e3e"></div>
<div style="left:3422px;top:1197px;width:2px;height:120px;background:#3e3e3e"></div>
<div style="left:3446px;top:1237px;width:2px;height:80px;background:#3e3e3e"></div>
<svg style="left:3342px;top:448px" width="16" height="18" viewBox="0 0 16 18"><path d="M4 3 V15 L12 9Z" fill="#b8b8b8"/></svg>
<svg style="left:3370px;top:443px" width="28" height="28" viewBox="0 0 28 28"><circle cx="7" cy="6" r="3.2" fill="#e8a050"/><circle cx="21" cy="6" r="3.2" fill="#e8a050"/><path d="M1 17 Q1 11 7 11 Q11 11 12 14 V17Z M27 17 Q27 11 21 11 Q17 11 16 14 V17Z" fill="#e8a050"/><circle cx="14" cy="10" r="3.4" fill="#50c060"/><path d="M8 26 Q8 15 14 15 Q20 15 20 26Z" fill="#50c060"/></svg>
<div class="tr t" style="left:3411px;top:437px">Players</div>
<svg style="left:3342px;top:488px" width="16" height="18" viewBox="0 0 16 18"><path d="M4 3 V15 L12 9Z" fill="#b8b8b8"/></svg>
<svg style="left:3370px;top:483px" width="28" height="28" viewBox="0 0 28 28"><path d="M14 2 Q22 2 22 10 Q22 14 18.5 17 V19 H9.5 V17 Q6 14 6 10 Q6 2 14 2Z" fill="#f5f070"/><path d="M15 5 Q19 6 19 10" stroke="#2e2e2e" stroke-width="1.6" fill="none"/><rect x="9.5" y="20" width="9" height="2.4" fill="#f5f070"/><rect x="10.5" y="23.5" width="7" height="2.4" rx="1" fill="#f5f070"/></svg>
<div class="tr t" style="left:3411px;top:477px">Lighting</div>
<svg style="left:3370px;top:523px" width="28" height="28" viewBox="0 0 28 28"><circle cx="11" cy="11" r="9.5" fill="#e8a050"/><path d="M11 1.5 A9.5 9.5 0 0 1 20.5 11 H11Z" fill="#fff"/><path d="M1.5 11 A9.5 9.5 0 0 0 11 20.5 V11Z" fill="#f4c890"/><rect x="14" y="14" width="13" height="13" rx="2" fill="#fff"/><circle cx="20.5" cy="20.5" r="3" fill="#2e2e2e"/></svg>
<div class="tr t" style="left:3411px;top:517px">MaterialService</div>
<svg style="left:3342px;top:568px" width="16" height="18" viewBox="0 0 16 18"><path d="M4 3 V15 L12 9Z" fill="#b8b8b8"/></svg>
<svg style="left:3370px;top:563px" width="28" height="28" viewBox="0 0 28 28"><path d="M4 14 A10 10 0 0 1 20 6" stroke="#40b0e8" stroke-width="2.4" fill="none"/><path d="M7.5 14 A6 6 0 0 1 17 9" stroke="#40b0e8" stroke-width="2.4" fill="none"/><circle cx="12" cy="13" r="2.5" fill="#40b0e8"/><rect x="10.5" y="14" width="3" height="13" fill="#40b0e8"/><rect x="14" y="14" width="13" height="13" rx="2" fill="#fff"/><circle cx="20.5" cy="20.5" r="3" fill="#2e2e2e"/></svg>
<div class="tr t" style="left:3411px;top:557px">NetworkClient</div>
<svg style="left:3370px;top:603px" width="28" height="28" viewBox="0 0 28 28"><rect x="3" y="3" width="22" height="22" rx="3" stroke="#eee" stroke-width="2.2" fill="none"/><circle cx="14" cy="14" r="4.5" fill="#eee"/></svg>
<div class="tr t" style="left:3411px;top:597px">PluginDebugService</div>
<svg style="left:3342px;top:648px" width="16" height="18" viewBox="0 0 16 18"><path d="M4 3 V15 L12 9Z" fill="#b8b8b8"/></svg>
<svg style="left:3370px;top:643px" width="28" height="28" viewBox="0 0 28 28"><path d="M5 9 V3 H23 V9" stroke="#5a90e8" stroke-width="2.2" fill="none"/><path d="M1.5 8 H8.5 L5 12Z M19.5 8 H26.5 L23 12Z" fill="#5a90e8"/><rect x="1" y="15" width="9" height="11" rx="1.5" fill="#eee"/><rect x="18" y="15" width="9" height="11" rx="1.5" fill="#eee"/><path d="M3 20 H8 M20 20 H25" stroke="#2e2e2e" stroke-width="1.4"/></svg>
<div class="tr t" style="left:3411px;top:637px">ReplicatedFirst</div>
<svg style="left:3342px;top:688px" width="16" height="18" viewBox="0 0 16 18"><path d="M4 3 V15 L12 9Z" fill="#b8b8b8"/></svg>
<svg style="left:3370px;top:683px" width="28" height="28" viewBox="0 0 28 28"><path d="M3 13 V4 Q3 2 5 2 H15 Q17 2 17 4 V6" stroke="#ccc" stroke-width="2.2" fill="none"/><path d="M7 8 H26 L24 25 H9Z" fill="#2e2e2e" stroke="#f0b030" stroke-width="2.4" stroke-linejoin="round"/><path d="M13 14 H19" stroke="#f0b030" stroke-width="2"/></svg>
<div class="tr t" style="left:3411px;top:677px">ReplicatedStorage</div>
<svg style="left:3341px;top:729px" width="18" height="16" viewBox="0 0 18 16"><path d="M2 4 H16 L9 12Z" fill="#b8b8b8"/></svg>
<svg style="left:3370px;top:723px" width="28" height="28" viewBox="0 0 28 28"><path d="M5 17 Q0 17 0 12.5 Q0 8.5 4 8 Q5 2 11 2 Q16 2 18 7 Q24 7 24 12.5 Q24 17 19 17Z" fill="#45b860"/><path d="M15 14 H27 Q26 15.5 26 17 V25 Q26 27 24 27 H12 Q13 25.5 13 24 V16 Q13 14 15 14Z" fill="#fff"/><path d="M16 19 H22 M16 22 H22" stroke="#2e2e2e" stroke-width="1.4"/></svg>
<div class="tr t" style="left:3411px;top:717px">ServerScriptService</div>
<svg style="left:3366px;top:768px" width="16" height="18" viewBox="0 0 16 18"><path d="M4 3 V15 L12 9Z" fill="#b8b8b8"/></svg>
<svg style="left:3394px;top:763px" width="28" height="28" viewBox="0 0 28 28"><path d="M1 6 Q1 3 4 3 H11 L14 6 H25 Q28 6 28 9 V24 Q28 27 25 27 H4 Q1 27 1 24Z" fill="#f5d88a"/></svg>
<div class="tr t" style="left:3435px;top:757px">Data</div>
<svg style="left:3366px;top:808px" width="16" height="18" viewBox="0 0 16 18"><path d="M4 3 V15 L12 9Z" fill="#b8b8b8"/></svg>
<svg style="left:3394px;top:803px" width="28" height="28" viewBox="0 0 28 28"><path d="M1 6 Q1 3 4 3 H11 L14 6 H25 Q28 6 28 9 V24 Q28 27 25 27 H4 Q1 27 1 24Z" fill="#f5d88a"/></svg>
<div class="tr t" style="left:3435px;top:797px">Libraries</div>
<svg style="left:3365px;top:849px" width="18" height="16" viewBox="0 0 18 16"><path d="M2 4 H16 L9 12Z" fill="#b8b8b8"/></svg>
<svg style="left:3394px;top:843px" width="28" height="28" viewBox="0 0 28 28"><path d="M1 6 Q1 3 4 3 H11 L14 6 H25 Q28 6 28 9 V24 Q28 27 25 27 H4 Q1 27 1 24Z" fill="#f5d88a"/></svg>
<div class="tr t" style="left:3435px;top:837px">System</div>
<svg style="left:3418px;top:883px" width="28" height="28" viewBox="0 0 28 28"><path d="M8 2 H27 Q25 5 25 8 V24 Q25 28 21 28 H2 Q5 25 5 22 V6 Q5 2 8 2Z" fill="#e4e4e4"/><path d="M9.5 9 H20 M9.5 14 H20 M9.5 19 H18" stroke="#2e2e2e" stroke-width="2.4"/></svg>
<div class="tr t" style="left:3459px;top:877px">LoadingScreenAnnouncementSystem</div>
<svg style="left:3418px;top:923px" width="28" height="28" viewBox="0 0 28 28"><path d="M8 2 H27 Q25 5 25 8 V24 Q25 28 21 28 H2 Q5 25 5 22 V6 Q5 2 8 2Z" fill="#e4e4e4"/><path d="M9.5 9 H20 M9.5 14 H20 M9.5 19 H18" stroke="#2e2e2e" stroke-width="2.4"/></svg>
<div class="tr t" style="left:3459px;top:917px">RagdollSystem</div>
<svg style="left:3418px;top:963px" width="28" height="28" viewBox="0 0 28 28"><path d="M8 2 H27 Q25 5 25 8 V24 Q25 28 21 28 H2 Q5 25 5 22 V6 Q5 2 8 2Z" fill="#e4e4e4"/><path d="M9.5 9 H20 M9.5 14 H20 M9.5 19 H18" stroke="#2e2e2e" stroke-width="2.4"/></svg>
<div class="tr t" style="left:3459px;top:957px">ShipSpawnSystem</div>
<svg style="left:3418px;top:1003px" width="28" height="28" viewBox="0 0 28 28"><path d="M8 2 H27 Q25 5 25 8 V24 Q25 28 21 28 H2 Q5 25 5 22 V6 Q5 2 8 2Z" fill="#e4e4e4"/><path d="M9.5 9 H20 M9.5 14 H20 M9.5 19 H18" stroke="#2e2e2e" stroke-width="2.4"/></svg>
<div class="tr t" style="left:3459px;top:997px">SkySystem</div>
<svg style="left:3341px;top:1049px" width="18" height="16" viewBox="0 0 18 16"><path d="M2 4 H16 L9 12Z" fill="#b8b8b8"/></svg>
<svg style="left:3370px;top:1043px" width="28" height="28" viewBox="0 0 28 28"><path d="M5 17 Q0 17 0 12.5 Q0 8.5 4 8 Q5 2 11 2 Q16 2 18 7 Q24 7 24 12.5 Q24 17 19 17Z" fill="#45b860"/><rect x="13" y="17" width="15" height="10" rx="2.5" fill="#fff"/><circle cx="23.5" cy="22" r="1.6" fill="#2e2e2e"/></svg>
<div class="tr t" style="left:3411px;top:1037px">ServerStorage</div>
<svg style="left:3365px;top:1089px" width="18" height="16" viewBox="0 0 18 16"><path d="M2 4 H16 L9 12Z" fill="#b8b8b8"/></svg>
<svg style="left:3394px;top:1083px" width="28" height="28" viewBox="0 0 28 28"><path d="M1 6 Q1 3 4 3 H11 L14 6 H25 Q28 6 28 9 V24 Q28 27 25 27 H4 Q1 27 1 24Z" fill="#f5d88a"/></svg>
<div class="tr t" style="left:3435px;top:1077px">EnemyShips</div>
<svg style="left:3389px;top:1129px" width="18" height="16" viewBox="0 0 18 16"><path d="M2 4 H16 L9 12Z" fill="#b8b8b8"/></svg>
<svg style="left:3418px;top:1123px" width="28" height="28" viewBox="0 0 28 28"><path d="M1 6 Q1 3 4 3 H11 L14 6 H25 Q28 6 28 9 V24 Q28 27 25 27 H4 Q1 27 1 24Z" fill="#f5d88a"/></svg>
<div class="tr t" style="left:3459px;top:1117px">ShipModels</div>
<svg style="left:3413px;top:1169px" width="18" height="16" viewBox="0 0 18 16"><path d="M2 4 H16 L9 12Z" fill="#b8b8b8"/></svg>
<svg style="left:3442px;top:1163px" width="28" height="28" viewBox="0 0 28 28"><rect x="9.5" y="2" width="9" height="9" rx="1.5" fill="#f0b030"/><rect x="2" y="14" width="11" height="11" rx="1.5" fill="#50a0f0"/><rect x="15" y="14" width="11" height="11" rx="1.5" fill="#e858b0"/></svg>
<div class="tr t" style="left:3483px;top:1157px">EnemyModel1</div>
<svg style="left:3437px;top:1209px" width="18" height="16" viewBox="0 0 18 16"><path d="M2 4 H16 L9 12Z" fill="#b8b8b8"/></svg>
<svg style="left:3466px;top:1203px" width="28" height="28" viewBox="0 0 28 28"><circle cx="14" cy="14" r="12" stroke="#eee" stroke-width="2.4" fill="none"/><path d="M2 14 H26 M4 8 Q14 12 24 8 M4 20 Q14 16 24 20 M14 2 Q8 14 14 26 M14 2 Q20 14 14 26" stroke="#eee" stroke-width="2" fill="none"/></svg>
<div class="tr t" style="left:3507px;top:1197px">EnemyShip</div>
<svg style="left:3490px;top:1243px" width="28" height="28" viewBox="0 0 28 28"><circle cx="14" cy="14" r="12.5" fill="#50a8f0"/><rect x="9" y="3" width="10" height="6" fill="#2e2e2e"/><rect x="3" y="9" width="6" height="10" fill="#2e2e2e"/><rect x="19" y="9" width="6" height="10" fill="#2e2e2e"/><rect x="9" y="19" width="10" height="6" fill="#2e2e2e"/><rect x="9" y="9" width="10" height="10" fill="#50a8f0"/></svg>
<div class="tr t" style="left:3531px;top:1237px">SurfaceAppearance</div>
<svg style="left:3490px;top:1283px" width="28" height="28" viewBox="0 0 28 28"><path d="M14 3 L24.5 8.5 V19.5 L14 25 L3.5 19.5 V8.5Z M3.5 8.5 L14 14 L24.5 8.5 M14 14 V25" stroke="#eee" stroke-width="2.4" fill="none" stroke-linejoin="round"/></svg>
<div class="tr t" style="left:3531px;top:1277px">MainPart</div>
<div style="left:4033px;top:634px;width:15px;height:410px;border-radius:8px;background:#3a3a3a"></div>
<div style="left:3326px;top:1321px;width:732px;height:11px;background:#3a3a3a"></div>
<div style="left:3328px;top:1332px;width:729px;height:46px;background:#363636;border:1px solid #232323"></div>
<div class="t" style="left:3328px;top:1341px;width:660px;text-align:center;font-size:24px;color:#bdbdbd">Properties - Model "Map"</div>
<svg style="left:3982px;top:1344px" width="28" height="28" viewBox="0 0 28 28"><path d="M10.7 13 H7 Q5 13 5 15 V21 Q5 23 7 23 H13 Q15 23 15 21 V18.4" stroke="#fff" stroke-width="2.1" fill="none" stroke-linecap="round"/><path d="M23.1 4.6 L16 11.7" stroke="#eee" stroke-width="2.1" stroke-linecap="round"/><path d="M11.9 6 V15.7 H21.7Z" fill="#eee"/></svg>
<svg style="left:4020px;top:1348px" width="20" height="20" viewBox="0 0 20 20"><path d="M4 4 L16 16 M16 4 L4 16" stroke="#eee" stroke-width="2.3" stroke-linecap="round"/></svg>
<div style="left:3328px;top:1378px;width:729px;height:788px;background:#2e2e2e"></div>
<div style="left:3329px;top:1379px;width:727px;height:46px;background:#282828;border:1.5px solid #1e1e1e"></div>
<div class="t" style="left:3340px;top:1387px;font-size:26px;color:#e0e0e0">Prima</div>
<svg style="left:4026px;top:1394px" width="20" height="14" viewBox="0 0 20 14"><path d="M3 3 H17 L10 11Z" fill="#8a8a8a"/></svg>
<div style="left:3330px;top:1433px;width:725px;height:51px;background:#333;border-top:1.5px solid #262626"></div>
<svg style="left:3341px;top:1449px" width="20" height="16" viewBox="0 0 20 16"><path d="M2 4 H18 L10 13Z" fill="#eee"/></svg>
<div class="t" style="left:3382px;top:1442px;font-size:26px;font-weight:bold;color:#e8e8e8">Pivot</div>
<div style="left:3330px;top:1484px;width:725px;height:47px;background:#2b2b2b;border-top:1.5px solid #262626"></div>
<div style="left:3689px;top:1486px;width:2px;height:44px;background:#262626"></div>
<div class="t" style="left:3378px;top:1493px;font-size:26px;color:#e0e0e0">PrimaryPart</div>
<div class="t" style="left:3700px;top:1493px;font-size:26px;color:#e0e0e0">MapBase</div>
<div style="left:3330px;top:1531px;width:725px;height:52px;background:#333;border-top:1.5px solid #262626"></div>
<svg style="left:3341px;top:1548px" width="20" height="16" viewBox="0 0 20 16"><path d="M2 4 H18 L10 13Z" fill="#eee"/></svg>
<div class="t" style="left:3382px;top:1541px;font-size:26px;font-weight:bold;color:#e8e8e8">Tags</div>
<div style="left:4010px;top:1540px;width:36px;height:23px;background:#2a2a2a"></div>
<svg style="left:4017px;top:1540px" width="22" height="22" viewBox="0 0 22 22"><path d="M11 3 V19 M3 11 H19" stroke="#fff" stroke-width="2.2"/></svg>
<div style="left:3330px;top:1583px;width:725px;height:44px;background:#2b2b2b;border-top:1.5px solid #262626"></div>
<div class="t" style="left:3370px;top:1590px;font-size:24.5px;color:#7c7c7c">No Tags have been added yet</div>
<div style="left:3330px;top:1627px;width:725px;height:52px;background:#333;border-top:1.5px solid #262626"></div>
<svg style="left:3341px;top:1644px" width="20" height="16" viewBox="0 0 20 16"><path d="M2 4 H18 L10 13Z" fill="#eee"/></svg>
<div class="t" style="left:3382px;top:1637px;font-size:26px;font-weight:bold;color:#e8e8e8">Attributes</div>
<div style="left:4010px;top:1636px;width:36px;height:23px;background:#2a2a2a"></div>
<svg style="left:4017px;top:1636px" width="22" height="22" viewBox="0 0 22 22"><path d="M11 3 V19 M3 11 H19" stroke="#fff" stroke-width="2.2"/></svg>
<div style="left:3330px;top:1679px;width:725px;height:44px;background:#2b2b2b;border-top:1.5px solid #262626"></div>
<div class="t" style="left:3370px;top:1686px;font-size:24.5px;color:#7c7c7c">No Attribute has been added yet</div>
<div style="left:3330px;top:1723px;width:725px;height:1.5px;background:#262626"></div>
<div style="left:3326px;top:2166px;width:732px;height:50px;background:#2c2c2c;border-top:1.5px solid #3a3a3a"></div>
<div style="left:3329px;top:2168px;width:297px;height:43px;background:#262626"></div>
<div class="btab" style="left:3329px;width:297px;color:#d8d8d8">Properties - Model "Map"</div>
<div class="btab" style="left:3628px;width:217px;background:#2e2e2e;height:38px">Live Collaborators</div>


<!-- ===== COMMAND BAR ===== -->
<div style="left:112px;top:2214px;width:3946px;height:3px;background:#3a3a3a"></div>
<div style="left:112px;top:2217px;width:3946px;height:112px;background:#2e2e2e"></div>
<div style="left:131px;top:2217px;width:3923px;height:46px;background:#0e121c"></div>
<div style="left:131px;top:2262px;width:3923px;height:3px;background:#222"></div>
<div style="left:117px;top:2224px;width:4px;height:4px;background:#9a9a9a"></div>
<div style="left:117px;top:2232px;width:4px;height:4px;background:#9a9a9a"></div>
<div style="left:117px;top:2240px;width:4px;height:4px;background:#9a9a9a"></div>
<div style="left:117px;top:2248px;width:4px;height:4px;background:#9a9a9a"></div>
<div class="t" style="left:142px;top:2229px;font-family:'Liberation Mono',monospace;font-size:25.7px;color:#e8e8e8;transform:scaleY(1.15);transform-origin:0 62%;-webkit-text-stroke:0.3px currentColor">Run a command</div>
<svg style="left:4026px;top:2233px" width="20" height="14" viewBox="0 0 20 14"><path d="M3 3 H17 L10 11Z" fill="#c8c8c8"/></svg>


</body></html>
